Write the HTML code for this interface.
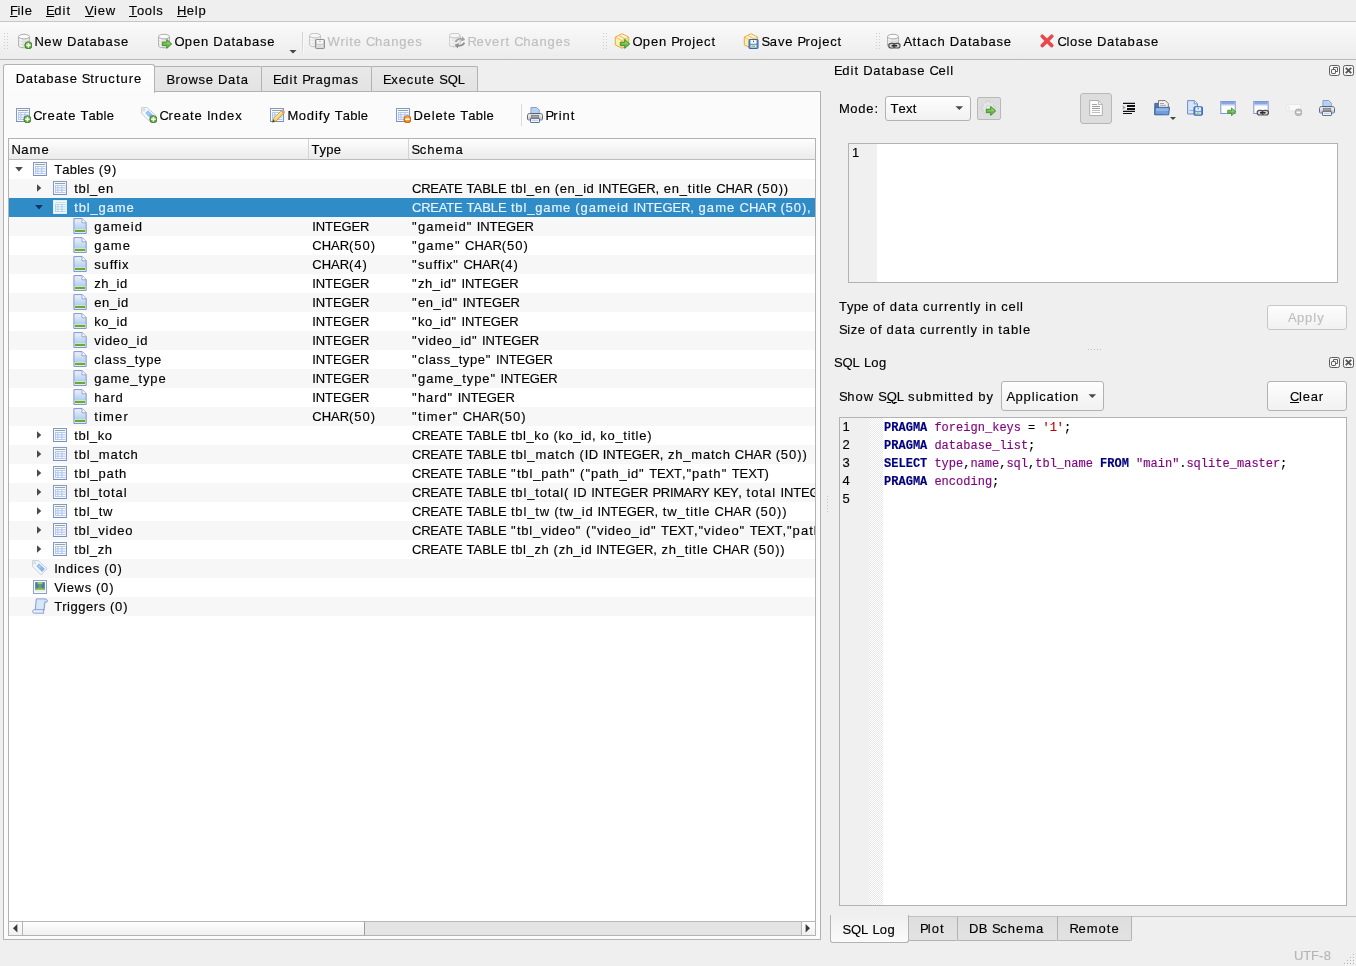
<!DOCTYPE html>
<html><head><meta charset="utf-8"><title>DB Browser for SQLite</title>
<style>
html,body{margin:0;padding:0;}
body{width:1356px;height:966px;overflow:hidden;background:#efefef;position:relative;font-family:"Liberation Sans",sans-serif;font-size:13px;}
div,span.t,svg{position:absolute;box-sizing:border-box;}
span.t{-webkit-text-stroke:0.15px;white-space:pre;line-height:20px;height:20px;}
u{text-decoration:underline;text-underline-offset:1px;text-decoration-thickness:1px;}
#root{left:0;top:0;width:1356px;height:966px;will-change:transform;transform:translateZ(0);}
</style></head><body><div id="root">
<svg width="0" height="0" style="left:0;top:0"><defs><linearGradient id="gf" x1="0" y1="0" x2="0" y2="1"><stop offset="0" stop-color="#edf3fb"/><stop offset=".7" stop-color="#b3cdf0"/><stop offset="1" stop-color="#a9c6ee"/></linearGradient></defs></svg>
<span class="t" style="left:10.00px;top:0.50px;"><span style="letter-spacing:-0.45px"><u>F</u></span><span style="letter-spacing:0.73px">ile</span></span>
<span class="t" style="left:46.00px;top:0.50px;"><span style="letter-spacing:-0.45px"><u>E</u></span><span style="letter-spacing:1.07px">dit</span></span>
<span class="t" style="left:85.00px;top:0.50px;"><span style="letter-spacing:0.22px"><u>V</u></span><span style="letter-spacing:0.91px">iew</span></span>
<span class="t" style="left:129.00px;top:0.50px;"><u>T</u><span style="letter-spacing:0.61px">ools</span></span>
<span class="t" style="left:177.00px;top:0.50px;"><span style="letter-spacing:0.39px"><u>H</u></span><span style="letter-spacing:0.83px">elp</span></span>
<div style="left:0px;top:21px;width:1356px;height:1px;background:#c6c6c6;"></div>
<div style="left:0px;top:22px;width:1356px;height:38px;background:linear-gradient(#fafafa,#ececec);border-bottom:1px solid #b8b8b8;"></div>
<div style="left:4px;top:33px;width:1px;height:1px;background:#cdcdcd;"></div>
<div style="left:7px;top:33px;width:1px;height:1px;background:#cdcdcd;"></div>
<div style="left:4px;top:36px;width:1px;height:1px;background:#cdcdcd;"></div>
<div style="left:7px;top:36px;width:1px;height:1px;background:#cdcdcd;"></div>
<div style="left:4px;top:39px;width:1px;height:1px;background:#cdcdcd;"></div>
<div style="left:7px;top:39px;width:1px;height:1px;background:#cdcdcd;"></div>
<div style="left:4px;top:42px;width:1px;height:1px;background:#cdcdcd;"></div>
<div style="left:7px;top:42px;width:1px;height:1px;background:#cdcdcd;"></div>
<div style="left:4px;top:45px;width:1px;height:1px;background:#cdcdcd;"></div>
<div style="left:7px;top:45px;width:1px;height:1px;background:#cdcdcd;"></div>
<div style="left:4px;top:48px;width:1px;height:1px;background:#cdcdcd;"></div>
<div style="left:7px;top:48px;width:1px;height:1px;background:#cdcdcd;"></div>
<div style="left:603px;top:33px;width:1px;height:1px;background:#cdcdcd;"></div>
<div style="left:606px;top:33px;width:1px;height:1px;background:#cdcdcd;"></div>
<div style="left:603px;top:36px;width:1px;height:1px;background:#cdcdcd;"></div>
<div style="left:606px;top:36px;width:1px;height:1px;background:#cdcdcd;"></div>
<div style="left:603px;top:39px;width:1px;height:1px;background:#cdcdcd;"></div>
<div style="left:606px;top:39px;width:1px;height:1px;background:#cdcdcd;"></div>
<div style="left:603px;top:42px;width:1px;height:1px;background:#cdcdcd;"></div>
<div style="left:606px;top:42px;width:1px;height:1px;background:#cdcdcd;"></div>
<div style="left:603px;top:45px;width:1px;height:1px;background:#cdcdcd;"></div>
<div style="left:606px;top:45px;width:1px;height:1px;background:#cdcdcd;"></div>
<div style="left:603px;top:48px;width:1px;height:1px;background:#cdcdcd;"></div>
<div style="left:606px;top:48px;width:1px;height:1px;background:#cdcdcd;"></div>
<div style="left:876px;top:33px;width:1px;height:1px;background:#cdcdcd;"></div>
<div style="left:879px;top:33px;width:1px;height:1px;background:#cdcdcd;"></div>
<div style="left:876px;top:36px;width:1px;height:1px;background:#cdcdcd;"></div>
<div style="left:879px;top:36px;width:1px;height:1px;background:#cdcdcd;"></div>
<div style="left:876px;top:39px;width:1px;height:1px;background:#cdcdcd;"></div>
<div style="left:879px;top:39px;width:1px;height:1px;background:#cdcdcd;"></div>
<div style="left:876px;top:42px;width:1px;height:1px;background:#cdcdcd;"></div>
<div style="left:879px;top:42px;width:1px;height:1px;background:#cdcdcd;"></div>
<div style="left:876px;top:45px;width:1px;height:1px;background:#cdcdcd;"></div>
<div style="left:879px;top:45px;width:1px;height:1px;background:#cdcdcd;"></div>
<div style="left:876px;top:48px;width:1px;height:1px;background:#cdcdcd;"></div>
<div style="left:879px;top:48px;width:1px;height:1px;background:#cdcdcd;"></div>
<span class="t" style="left:34.50px;top:31.50px;"><span style="letter-spacing:0.33px">N</span><span style="letter-spacing:1.00px">ew</span><span style="letter-spacing:0.52px"> </span><span style="letter-spacing:0.62px">D</span><span style="letter-spacing:0.82px">atabase</span></span>
<span class="t" style="left:174.50px;top:31.50px;"><span style="letter-spacing:0.12px">O</span><span style="letter-spacing:0.93px">pen</span><span style="letter-spacing:0.52px"> </span><span style="letter-spacing:0.62px">D</span><span style="letter-spacing:0.82px">atabase</span></span>
<span class="t" style="left:327.50px;top:31.50px;color:#bebebe;"><span style="letter-spacing:0.59px">W</span><span style="letter-spacing:0.85px">rite</span><span style="letter-spacing:0.52px"> </span><span style="letter-spacing:-0.31px">C</span><span style="letter-spacing:0.80px">hanges</span></span>
<span class="t" style="left:467.50px;top:31.50px;color:#bebebe;"><span style="letter-spacing:-0.36px">R</span><span style="letter-spacing:0.93px">evert</span><span style="letter-spacing:0.52px"> </span><span style="letter-spacing:-0.31px">C</span><span style="letter-spacing:0.80px">hanges</span></span>
<span class="t" style="left:632.50px;top:31.50px;"><span style="letter-spacing:0.12px">O</span><span style="letter-spacing:0.93px">pen</span><span style="letter-spacing:0.52px"> </span><span style="letter-spacing:-0.83px">P</span><span style="letter-spacing:0.80px">roject</span></span>
<span class="t" style="left:761.50px;top:31.50px;"><span style="letter-spacing:-0.42px">S</span><span style="letter-spacing:0.90px">ave</span><span style="letter-spacing:0.52px"> </span><span style="letter-spacing:-0.83px">P</span><span style="letter-spacing:0.80px">roject</span></span>
<span class="t" style="left:903.50px;top:31.50px;"><span style="letter-spacing:0.22px">A</span><span style="letter-spacing:1.02px">ttach</span><span style="letter-spacing:0.52px"> </span><span style="letter-spacing:0.62px">D</span><span style="letter-spacing:0.82px">atabase</span></span>
<span class="t" style="left:1057.50px;top:31.50px;"><span style="letter-spacing:-0.31px">C</span><span style="letter-spacing:0.62px">lose</span><span style="letter-spacing:0.52px"> </span><span style="letter-spacing:0.62px">D</span><span style="letter-spacing:0.82px">atabase</span></span>
<svg style="left:16px;top:33px" width="16" height="16" viewBox="0 0 16 16"><path d="M2.5 3.6v8.8c0 1.5 2.5 2.4 5.5 2.4s5.5-.9 5.5-2.4V3.6" fill="#e6e6e6" stroke="#adadad"/><path d="M3.3 4.5v7.8c0 .9 1.2 1.5 2.4 1.7V6z" fill="#fbfbfb" opacity=".8"/><path d="M2.5 6.6c0 1.4 2.5 2.2 5.5 2.2s5.5-.8 5.5-2.2M2.5 9.6c0 1.4 2.5 2.2 5.5 2.2s5.5-.8 5.5-2.2" fill="none" stroke="#d6d6d6" stroke-width=".8"/><ellipse cx="8" cy="3.6" rx="5.5" ry="2.3" fill="#fbfbfb" stroke="#adadad"/><circle cx="12.4" cy="12.3" r="3.6" fill="#62a840" stroke="#417e2a" stroke-width=".9"/><circle cx="12.4" cy="11.700000000000001" r="2.6" fill="#7cc058" opacity=".6"/><path d="M12.4 10.100000000000001v4.4M10.2 12.3h4.4" stroke="#fff" stroke-width="1.5"/></svg>
<svg style="left:156px;top:33px" width="16" height="16" viewBox="0 0 16 16"><path d="M2.5 3.6v8.8c0 1.5 2.5 2.4 5.5 2.4s5.5-.9 5.5-2.4V3.6" fill="#e6e6e6" stroke="#adadad"/><path d="M3.3 4.5v7.8c0 .9 1.2 1.5 2.4 1.7V6z" fill="#fbfbfb" opacity=".8"/><path d="M2.5 6.6c0 1.4 2.5 2.2 5.5 2.2s5.5-.8 5.5-2.2M2.5 9.6c0 1.4 2.5 2.2 5.5 2.2s5.5-.8 5.5-2.2" fill="none" stroke="#d6d6d6" stroke-width=".8"/><ellipse cx="8" cy="3.6" rx="5.5" ry="2.3" fill="#fbfbfb" stroke="#adadad"/><path transform="translate(0 0)" d="M6.3 9.2h4.4V6.4l5 4.5-5 4.5v-2.8H6.3z" fill="#6dbb4b" stroke="#3d8a2b" stroke-width=".9" stroke-linejoin="round"/><path transform="translate(0 0)" d="M7 10h4.4V8.2l3 2.7z" fill="#a4dd86" opacity=".7"/></svg>
<svg style="left:309px;top:33px" width="16" height="16" viewBox="0 0 16 16"><g transform="translate(-2 -1)"><path d="M2.5 3.6v8.8c0 1.5 2.5 2.4 5.5 2.4s5.5-.9 5.5-2.4V3.6" fill="#ededed" stroke="#c0c0c0"/><path d="M3.3 4.5v7.8c0 .9 1.2 1.5 2.4 1.7V6z" fill="#f7f7f7" opacity=".8"/><path d="M2.5 6.6c0 1.4 2.5 2.2 5.5 2.2s5.5-.8 5.5-2.2M2.5 9.6c0 1.4 2.5 2.2 5.5 2.2s5.5-.8 5.5-2.2" fill="none" stroke="#e2e2e2" stroke-width=".8"/><ellipse cx="8" cy="3.6" rx="5.5" ry="2.3" fill="#f7f7f7" stroke="#c0c0c0"/></g><rect x="6.5" y="6.5" width="9" height="9" rx=".8" fill="#c9c9c9" stroke="#919191"/><rect x="8.0" y="7.0" width="6" height="3.78" fill="#f8f8f8"/><rect x="8.0" y="11.90" width="6" height="2.70" fill="#dfe7f2"/><rect x="9.0" y="12.62" width="3.5" height="1.3" fill="#d6d6d6"/><rect x="10.5" y="7.7" width="1" height="1.4" fill="#919191"/></svg>
<svg style="left:449px;top:33px" width="16" height="16" viewBox="0 0 16 16"><g transform="translate(-2.300 -1)"><path d="M2.5 3.6v8.8c0 1.5 2.5 2.4 5.5 2.4s5.5-.9 5.5-2.4V3.6" fill="#ededed" stroke="#c0c0c0"/><path d="M3.3 4.5v7.8c0 .9 1.2 1.5 2.4 1.7V6z" fill="#f7f7f7" opacity=".8"/><path d="M2.5 6.6c0 1.4 2.5 2.2 5.5 2.2s5.5-.8 5.5-2.2M2.5 9.6c0 1.4 2.5 2.2 5.5 2.2s5.5-.8 5.5-2.2" fill="none" stroke="#e2e2e2" stroke-width=".8"/><ellipse cx="8" cy="3.6" rx="5.5" ry="2.3" fill="#f7f7f7" stroke="#c0c0c0"/></g><path d="M5.800 8.800c1.200-3 4-4.200 7-3.600l.400-2 3.200 3.700-4.400 1.500.400-1.700c-2-.400-3.800.400-4.800 2.600z" fill="#a2a2a2"/><path d="M16.200 9.800c-1.200 3-4 4.200-7 3.600l-.400 2-3.200-3.700 4.400-1.500-.400 1.700c2 .400 3.800-.400 4.800-2.600z" fill="#8e8e8e"/></svg>
<svg style="left:614px;top:33px" width="16" height="16" viewBox="0 0 16 16"><path d="M8 .7l6.7 3.4v7.8L8 15.3 1.3 11.9V4.1z" fill="#fbf1a8" stroke="#dfa94e" stroke-linejoin="round"/><path d="M1.6 4.3L8 7.5l6.4-3.2M8 7.5v7.6" fill="none" stroke="#e8b45c" stroke-width=".9"/><path d="M8 1.4L2.6 4.1 8 6.8l5.4-2.7z" fill="#fdf7cf"/><path d="M8 7.9l6.2-3.1v6.8L8 14.7z" fill="#f5dc7e" opacity=".75"/><path d="M4.6 2.6l6.5 3.2" stroke="#eec06c" stroke-width="1.1"/><path transform="translate(0 0)" d="M6.3 9.2h4.4V6.4l5 4.5-5 4.5v-2.8H6.3z" fill="#6dbb4b" stroke="#3d8a2b" stroke-width=".9" stroke-linejoin="round"/><path transform="translate(0 0)" d="M7 10h4.4V8.2l3 2.7z" fill="#a4dd86" opacity=".7"/></svg>
<svg style="left:743px;top:33px" width="16" height="16" viewBox="0 0 16 16"><path d="M8 .7l6.7 3.4v7.8L8 15.3 1.3 11.9V4.1z" fill="#fbf1a8" stroke="#dfa94e" stroke-linejoin="round"/><path d="M1.6 4.3L8 7.5l6.4-3.2M8 7.5v7.6" fill="none" stroke="#e8b45c" stroke-width=".9"/><path d="M8 1.4L2.6 4.1 8 6.8l5.4-2.7z" fill="#fdf7cf"/><path d="M8 7.9l6.2-3.1v6.8L8 14.7z" fill="#f5dc7e" opacity=".75"/><path d="M4.6 2.6l6.5 3.2" stroke="#eec06c" stroke-width="1.1"/><rect x="6" y="6.5" width="9" height="9" rx=".8" fill="#5d8fd4" stroke="#3c62a2"/><rect x="7.5" y="7.0" width="6" height="3.78" fill="#f4f7fb"/><rect x="7.5" y="11.90" width="6" height="2.70" fill="#dfe7f2"/><rect x="8.5" y="12.62" width="3.5" height="1.3" fill="#8cc152"/><rect x="10.0" y="7.7" width="1" height="1.4" fill="#3c62a2"/></svg>
<svg style="left:885px;top:33px" width="16" height="16" viewBox="0 0 16 16"><path d="M2.5 3.6v8.8c0 1.5 2.5 2.4 5.5 2.4s5.5-.9 5.5-2.4V3.6" fill="#e6e6e6" stroke="#adadad"/><path d="M3.3 4.5v7.8c0 .9 1.2 1.5 2.4 1.7V6z" fill="#fbfbfb" opacity=".8"/><path d="M2.5 6.6c0 1.4 2.5 2.2 5.5 2.2s5.5-.8 5.5-2.2M2.5 9.6c0 1.4 2.5 2.2 5.5 2.2s5.5-.8 5.5-2.2" fill="none" stroke="#d6d6d6" stroke-width=".8"/><ellipse cx="8" cy="3.6" rx="5.5" ry="2.3" fill="#fbfbfb" stroke="#adadad"/><g transform="translate(3.2 9.8)"><rect x=".6" y=".6" width="6.2" height="4.6" rx="2.2" fill="#dcdcdc" stroke="#4f4f4f" stroke-width="1.2"/><rect x="5.6" y=".6" width="6.2" height="4.6" rx="2.2" fill="#dcdcdc" stroke="#4f4f4f" stroke-width="1.2"/><path d="M3.4 2.9h5.6" stroke="#2b2b2b" stroke-width="1.7"/></g></svg>
<svg style="left:1039px;top:33px" width="16" height="16" viewBox="0 0 16 16"><path d="M3.200 3.200l9.600 9.400M12.800 3.200L3.200 12.600" stroke="#d9505c" stroke-width="3.600" stroke-linecap="round"/><path d="M3.400 3.400l9.200 9M12.600 3.400L3.400 12.400" stroke="#f24545" stroke-width="2.200" stroke-linecap="round"/></svg>
<div style="left:302px;top:32px;width:1px;height:22px;background:linear-gradient(#d0d0d0,#d8d8d8 70%,#e4e4e4);"></div>
<div style="left:303px;top:32px;width:1px;height:22px;background:#f8f8f8;"></div>
<svg style="left:289px;top:50px" width="8" height="4"><path d="M0.5 0h7l-3.500 3.600z" fill="#444"/></svg>
<div style="left:3px;top:91px;width:818px;height:849px;background:#fbfbfb;border:1px solid #b2b2b2;"></div>
<div style="left:154px;top:66px;width:108px;height:25px;background:linear-gradient(#e9e9e9,#e3e3e3);border:1px solid #b2b2b2;border-bottom:none;border-radius:2px 2px 0 0;"></div>
<span class="t" style="left:166.50px;top:69.50px;"><span style="letter-spacing:0.25px">B</span><span style="letter-spacing:0.74px">rowse</span><span style="letter-spacing:0.52px"> </span><span style="letter-spacing:0.62px">D</span><span style="letter-spacing:0.98px">ata</span></span>
<div style="left:261px;top:66px;width:111px;height:25px;background:linear-gradient(#e9e9e9,#e3e3e3);border:1px solid #b2b2b2;border-bottom:none;border-radius:2px 2px 0 0;"></div>
<span class="t" style="left:273.00px;top:69.50px;"><span style="letter-spacing:-0.45px">E</span><span style="letter-spacing:1.07px">dit</span><span style="letter-spacing:0.52px"> </span><span style="letter-spacing:-0.83px">P</span><span style="letter-spacing:0.89px">ragmas</span></span>
<div style="left:371px;top:66px;width:107px;height:25px;background:linear-gradient(#e9e9e9,#e3e3e3);border:1px solid #b2b2b2;border-bottom:none;border-radius:2px 2px 0 0;"></div>
<span class="t" style="left:383.00px;top:69.50px;"><span style="letter-spacing:-0.45px">E</span><span style="letter-spacing:0.91px">xecute</span><span style="letter-spacing:0.52px"> </span><span style="letter-spacing:-0.09px">SQL</span></span>
<div style="left:3px;top:64px;width:152px;height:29px;background:linear-gradient(#fdfdfd,#fbfbfb);border:1px solid #b2b2b2;border-bottom:none;border-radius:3px 3px 0 0;"></div>
<span class="t" style="left:15.70px;top:68.50px;"><span style="letter-spacing:0.62px">D</span><span style="letter-spacing:0.82px">atabase</span><span style="letter-spacing:0.52px"> </span><span style="letter-spacing:-0.42px">S</span><span style="letter-spacing:1.02px">tructure</span></span>
<span class="t" style="left:33.20px;top:105.50px;"><span style="letter-spacing:-0.31px">C</span><span style="letter-spacing:0.90px">reate</span><span style="letter-spacing:0.52px"> </span>T<span style="letter-spacing:0.27px">able</span></span>
<span class="t" style="left:159.50px;top:105.50px;"><span style="letter-spacing:-0.31px">C</span><span style="letter-spacing:0.90px">reate</span><span style="letter-spacing:0.52px"> </span><span style="letter-spacing:0.22px">I</span><span style="letter-spacing:0.93px">ndex</span></span>
<span class="t" style="left:287.50px;top:105.50px;"><span style="letter-spacing:0.39px">M</span><span style="letter-spacing:0.88px">odify</span><span style="letter-spacing:0.52px"> </span>T<span style="letter-spacing:0.27px">able</span></span>
<span class="t" style="left:413.50px;top:105.50px;"><span style="letter-spacing:0.62px">D</span><span style="letter-spacing:0.90px">elete</span><span style="letter-spacing:0.52px"> </span>T<span style="letter-spacing:0.27px">able</span></span>
<span class="t" style="left:545.50px;top:105.50px;"><span style="letter-spacing:-0.83px">P</span><span style="letter-spacing:1.00px">rint</span></span>
<div style="left:521px;top:104px;width:1px;height:22px;background:#dadada;"></div>
<svg style="left:15px;top:107px" width="16" height="16" viewBox="0 0 16 16"><rect x="1.500" y="1.500" width="13" height="13" fill="#f5f9fe" stroke="#8298c6"/><path d="M1.500 14.500h13" stroke="#7389bb" opacity=".6"/><path d="M3 3.500h10.200" stroke="#8fa69b" stroke-width="1"/><rect x="3" y="5" width="10.500" height="8" fill="#b4c8f0"/><rect x="4" y="6" width="1.300" height="1.200" fill="#ffffff"/><rect x="6.400" y="6" width="2.800" height="1.200" fill="#ffffff"/><rect x="10.400" y="6" width="3.100" height="1.200" fill="#ffffff"/><rect x="4" y="8.4" width="1.300" height="1.200" fill="#ffffff"/><rect x="6.400" y="8.4" width="2.800" height="1.200" fill="#ffffff"/><rect x="10.400" y="8.4" width="3.100" height="1.200" fill="#ffffff"/><rect x="4" y="10.8" width="1.300" height="1.200" fill="#ffffff"/><rect x="6.400" y="10.8" width="2.800" height="1.200" fill="#ffffff"/><rect x="10.400" y="10.8" width="3.100" height="1.200" fill="#ffffff"/><circle cx="12.4" cy="12.3" r="3.6" fill="#62a840" stroke="#417e2a" stroke-width=".9"/><circle cx="12.4" cy="11.700000000000001" r="2.6" fill="#7cc058" opacity=".6"/><path d="M12.4 10.100000000000001v4.4M10.2 12.3h4.4" stroke="#fff" stroke-width="1.5"/></svg>
<svg style="left:141px;top:107px" width="16" height="16" viewBox="0 0 16 16"><path d="M.600 .600h5.600l8.900 8.100-6.100 6.100L.600 6.300z" fill="#f4f7fb" stroke="#bfc8d4" stroke-width=".900" stroke-linejoin="round"/><path d="M4.300 6l2.700-2.500 6 5.400-3 3z" fill="#84b7ec"/><path d="M5.300 6l1.700-1.500 2.600 2.300-1.800 1.700z" fill="#a9cff5" opacity=".8"/><circle cx="2.900" cy="2.900" r="1" fill="#fdfdfd" stroke="#b7c0cc" stroke-width=".700"/><circle cx="12.4" cy="12.3" r="3.6" fill="#62a840" stroke="#417e2a" stroke-width=".9"/><circle cx="12.4" cy="11.700000000000001" r="2.6" fill="#7cc058" opacity=".6"/><path d="M12.4 10.100000000000001v4.4M10.2 12.3h4.4" stroke="#fff" stroke-width="1.5"/></svg>
<svg style="left:269px;top:107px" width="16" height="16" viewBox="0 0 16 16"><rect x="1.500" y="1.500" width="13" height="13" fill="#f5f9fe" stroke="#8298c6"/><path d="M1.500 14.500h13" stroke="#7389bb" opacity=".6"/><path d="M3 3.500h10.200" stroke="#8fa69b" stroke-width="1"/><rect x="3" y="5" width="10.500" height="8" fill="#b4c8f0"/><rect x="4" y="6" width="1.300" height="1.200" fill="#ffffff"/><rect x="6.400" y="6" width="2.800" height="1.200" fill="#ffffff"/><rect x="10.400" y="6" width="3.100" height="1.200" fill="#ffffff"/><rect x="4" y="8.4" width="1.300" height="1.200" fill="#ffffff"/><rect x="6.400" y="8.4" width="2.800" height="1.200" fill="#ffffff"/><rect x="10.400" y="8.4" width="3.100" height="1.200" fill="#ffffff"/><rect x="4" y="10.8" width="1.300" height="1.200" fill="#ffffff"/><rect x="6.400" y="10.8" width="2.800" height="1.200" fill="#ffffff"/><rect x="10.400" y="10.8" width="3.100" height="1.200" fill="#ffffff"/><g transform="translate(0 .4)"><path d="M3.6 14.6l1-3.3 7.8-7.8 2.4 2.4L7 13.7z" fill="#f6d45a" stroke="#c58a2a" stroke-width=".8" stroke-linejoin="round"/><path d="M5.2 11l7.6-7.5.9.9-7.6 7.6z" fill="#fbe990"/><path d="M12.4 3.5l1.2-1.1 2.1 2.3-1 1.2z" fill="#f2a7a0" stroke="#c87a6c" stroke-width=".6"/><path d="M3.2 15l.9-2.9 2 2z" fill="#3a3a3a"/></g></svg>
<svg style="left:395px;top:107px" width="16" height="16" viewBox="0 0 16 16"><rect x="1.500" y="1.500" width="13" height="13" fill="#f5f9fe" stroke="#8298c6"/><path d="M1.500 14.500h13" stroke="#7389bb" opacity=".6"/><path d="M3 3.500h10.200" stroke="#8fa69b" stroke-width="1"/><rect x="3" y="5" width="10.500" height="8" fill="#b4c8f0"/><rect x="4" y="6" width="1.300" height="1.200" fill="#ffffff"/><rect x="6.400" y="6" width="2.800" height="1.200" fill="#ffffff"/><rect x="10.400" y="6" width="3.100" height="1.200" fill="#ffffff"/><rect x="4" y="8.4" width="1.300" height="1.200" fill="#ffffff"/><rect x="6.400" y="8.4" width="2.800" height="1.200" fill="#ffffff"/><rect x="10.400" y="8.4" width="3.100" height="1.200" fill="#ffffff"/><rect x="4" y="10.8" width="1.300" height="1.200" fill="#ffffff"/><rect x="6.400" y="10.8" width="2.800" height="1.200" fill="#ffffff"/><rect x="10.400" y="10.8" width="3.100" height="1.200" fill="#ffffff"/><circle cx="12.4" cy="12.3" r="3.6" fill="#ef8b1f" stroke="#c25a0c" stroke-width=".9"/><circle cx="12.4" cy="11.5" r="2.4" fill="#f8b04a" opacity=".7"/><path d="M10.2 12.3h4.4" stroke="#fff" stroke-width="1.5"/></svg>
<svg style="left:527px;top:107px" width="16" height="16" viewBox="0 0 16 16"><path d="M4 7.500V.600h5.800l2.400 2.400v4.500" fill="#cfe2f8" stroke="#7a93c6" stroke-linejoin="round"/><path d="M4.900 1.500h4.400l2 2v3.500H4.900z" fill="#b4d0f2"/><path d="M2.400 6.500h11.200c1.100 0 1.900.900 1.900 2v3.400c0 .600-.400 1-1 1H1.500c-.600 0-1-.400-1-1V8.500c0-1.100.800-2 1.900-2z" fill="#e9e9e9" stroke="#566682" stroke-linejoin="round"/><path d="M1.200 10.300h13.600v2.100H1.200z" fill="#c4c4c4" opacity=".8"/><rect x="4.200" y="8.200" width="7.600" height="2.700" fill="#a4a4a4" stroke="#6f6f6f" stroke-width=".600"/><path d="M3.500 11.600h9v3.400c0 .300-.200.500-.500.500H4c-.300 0-.500-.200-.500-.500z" fill="#f5f9fe" stroke="#566682" stroke-width=".900"/><path d="M4.800 13.600h6.400" stroke="#b4cae8" stroke-width=".900"/></svg>
<div style="left:8px;top:138px;width:808px;height:798px;background:#fff;border:1px solid #b2b2b2;"></div>
<div style="left:9px;top:139px;width:806px;height:21px;background:linear-gradient(#fefefe,#ebebeb);border-bottom:1px solid #bdbdbd;"></div>
<div style="left:308px;top:139px;width:1px;height:20px;background:#d4d4d4;"></div>
<div style="left:408px;top:139px;width:1px;height:20px;background:#d4d4d4;"></div>
<span class="t" style="left:11.50px;top:139.50px;"><span style="letter-spacing:0.33px">N</span><span style="letter-spacing:1.11px">ame</span></span>
<span class="t" style="left:311.50px;top:139.50px;">T<span style="letter-spacing:0.31px">ype</span></span>
<span class="t" style="left:411.50px;top:139.50px;"><span style="letter-spacing:-0.42px">S</span><span style="letter-spacing:0.99px">chema</span></span>
<span class="t" style="left:54.20px;top:159.50px;">T<span style="letter-spacing:0.27px">ables</span><span style="letter-spacing:0.52px"> </span><span style="letter-spacing:0.75px">(</span><span style="letter-spacing:1.03px">9</span><span style="letter-spacing:0.75px">)</span></span>
<svg style="left:15px;top:167px" width="8" height="5"><path d="M0.200 0h7.600l-3.800 4.500z" fill="#4a4a4a"/></svg>
<svg style="left:32px;top:161px" width="16" height="16" viewBox="0 0 16 16"><rect x="1.500" y="1.500" width="13" height="13" fill="#f5f9fe" stroke="#8298c6"/><path d="M1.500 14.500h13" stroke="#7389bb" opacity=".6"/><path d="M3 3.500h10.200" stroke="#8fa69b" stroke-width="1"/><rect x="3" y="5" width="10.500" height="8" fill="#b4c8f0"/><rect x="4" y="6" width="1.300" height="1.200" fill="#ffffff"/><rect x="6.400" y="6" width="2.800" height="1.200" fill="#ffffff"/><rect x="10.400" y="6" width="3.100" height="1.200" fill="#ffffff"/><rect x="4" y="8.4" width="1.300" height="1.200" fill="#ffffff"/><rect x="6.400" y="8.4" width="2.800" height="1.200" fill="#ffffff"/><rect x="10.400" y="8.4" width="3.100" height="1.200" fill="#ffffff"/><rect x="4" y="10.8" width="1.300" height="1.200" fill="#ffffff"/><rect x="6.400" y="10.8" width="2.800" height="1.200" fill="#ffffff"/><rect x="10.400" y="10.8" width="3.100" height="1.200" fill="#ffffff"/></svg>
<div style="left:9px;top:179px;width:806px;height:19px;background:#f7f7f7;"></div>
<span class="t" style="left:74.20px;top:178.50px;"><span style="letter-spacing:0.71px">tbl_en</span></span>
<div style="left:409px;top:179px;width:406px;height:19px;overflow:hidden;">
<span class="t" style="left:3.00px;top:-0.50px;"><span style="letter-spacing:-0.23px">CREATE</span><span style="letter-spacing:0.52px"> </span>TABLE<span style="letter-spacing:0.52px"> </span><span style="letter-spacing:0.71px">tbl_en</span><span style="letter-spacing:0.52px"> </span><span style="letter-spacing:0.75px">(</span><span style="letter-spacing:0.55px">en_id</span><span style="letter-spacing:0.52px"> </span><span style="letter-spacing:-0.11px">INTEGER</span><span style="letter-spacing:0.52px">,</span><span style="letter-spacing:0.52px"> </span><span style="letter-spacing:0.78px">en_title</span><span style="letter-spacing:0.52px"> </span><span style="letter-spacing:-0.02px">CHAR</span><span style="letter-spacing:0.52px"> </span><span style="letter-spacing:0.75px">(</span><span style="letter-spacing:1.03px">50</span><span style="letter-spacing:0.75px">))</span></span>
</div>
<svg style="left:37px;top:184px" width="5" height="8"><path d="M0 0.200v7.600l4.300-3.800z" fill="#4a4a4a"/></svg>
<svg style="left:52px;top:180px" width="16" height="16" viewBox="0 0 16 16"><rect x="1.500" y="1.500" width="13" height="13" fill="#f5f9fe" stroke="#8298c6"/><path d="M1.500 14.500h13" stroke="#7389bb" opacity=".6"/><path d="M3 3.500h10.200" stroke="#8fa69b" stroke-width="1"/><rect x="3" y="5" width="10.500" height="8" fill="#b4c8f0"/><rect x="4" y="6" width="1.300" height="1.200" fill="#ffffff"/><rect x="6.400" y="6" width="2.800" height="1.200" fill="#ffffff"/><rect x="10.400" y="6" width="3.100" height="1.200" fill="#ffffff"/><rect x="4" y="8.4" width="1.300" height="1.200" fill="#ffffff"/><rect x="6.400" y="8.4" width="2.800" height="1.200" fill="#ffffff"/><rect x="10.400" y="8.4" width="3.100" height="1.200" fill="#ffffff"/><rect x="4" y="10.8" width="1.300" height="1.200" fill="#ffffff"/><rect x="6.400" y="10.8" width="2.800" height="1.200" fill="#ffffff"/><rect x="10.400" y="10.8" width="3.100" height="1.200" fill="#ffffff"/></svg>
<div style="left:9px;top:198px;width:806px;height:19px;background:#308cc6;"></div>
<span class="t" style="left:74.20px;top:197.50px;color:#e9f4fb;"><span style="letter-spacing:0.85px">tbl_game</span></span>
<div style="left:409px;top:198px;width:406px;height:19px;overflow:hidden;">
<span class="t" style="left:3.00px;top:-0.50px;color:#e9f4fb;"><span style="letter-spacing:-0.23px">CREATE</span><span style="letter-spacing:0.52px"> </span>TABLE<span style="letter-spacing:0.52px"> </span><span style="letter-spacing:0.85px">tbl_game</span><span style="letter-spacing:0.52px"> </span><span style="letter-spacing:0.75px">(</span><span style="letter-spacing:1.01px">gameid</span><span style="letter-spacing:0.52px"> </span><span style="letter-spacing:-0.11px">INTEGER</span><span style="letter-spacing:0.52px">,</span><span style="letter-spacing:0.52px"> </span><span style="letter-spacing:1.09px">game</span><span style="letter-spacing:0.52px"> </span><span style="letter-spacing:-0.02px">CHAR</span><span style="letter-spacing:0.52px"> </span><span style="letter-spacing:0.75px">(</span><span style="letter-spacing:1.03px">50</span><span style="letter-spacing:0.63px">),</span></span>
</div>
<svg style="left:35px;top:205px" width="8" height="5"><path d="M0.200 0h7.600l-3.800 4.500z" fill="#0b3562"/></svg>
<svg style="left:52px;top:199px" width="16" height="16" viewBox="0 0 16 16"><rect x="1.500" y="1.500" width="13" height="13" fill="#f3f8fc" stroke="#e2eff9"/><path d="M1.500 14.500h13" stroke="#e2eff9" opacity=".6"/><path d="M3 3.500h10.200" stroke="#c9dbe6" stroke-width="1"/><rect x="3" y="5" width="10.500" height="8" fill="#b3d4ed"/><rect x="4" y="6" width="1.300" height="1.200" fill="#ffffff"/><rect x="6.400" y="6" width="2.800" height="1.200" fill="#ffffff"/><rect x="10.400" y="6" width="3.100" height="1.200" fill="#ffffff"/><rect x="4" y="8.4" width="1.300" height="1.200" fill="#ffffff"/><rect x="6.400" y="8.4" width="2.800" height="1.200" fill="#ffffff"/><rect x="10.400" y="8.4" width="3.100" height="1.200" fill="#ffffff"/><rect x="4" y="10.8" width="1.300" height="1.200" fill="#ffffff"/><rect x="6.400" y="10.8" width="2.800" height="1.200" fill="#ffffff"/><rect x="10.400" y="10.8" width="3.100" height="1.200" fill="#ffffff"/></svg>
<div style="left:9px;top:217px;width:806px;height:19px;background:#f7f7f7;"></div>
<span class="t" style="left:94.20px;top:216.50px;"><span style="letter-spacing:1.01px">gameid</span></span>
<span class="t" style="left:312.30px;top:216.50px;"><span style="letter-spacing:-0.11px">INTEGER</span></span>
<div style="left:409px;top:217px;width:406px;height:19px;overflow:hidden;">
<span class="t" style="left:3.00px;top:-0.50px;"><span style="letter-spacing:1.38px">&quot;</span><span style="letter-spacing:1.01px">gameid</span><span style="letter-spacing:1.38px">&quot;</span><span style="letter-spacing:0.52px"> </span><span style="letter-spacing:-0.11px">INTEGER</span></span>
</div>
<svg style="left:72px;top:218px" width="16" height="16" viewBox="0 0 16 16"><path d="M1.900 .6h8.300l4 4v10.900h-12.300z" fill="url(#gf)" stroke="#8497c8" stroke-linejoin="round"/><path d="M10 .8v4h4" fill="#fff" stroke="#8b9fcf" stroke-width=".9" stroke-linejoin="round"/><rect x="2.800" y="11" width="10.500" height="4" fill="#fff"/><rect x="3" y="11.700" width="10.100" height="2.500" fill="#67aa3c"/></svg>
<span class="t" style="left:94.20px;top:235.50px;"><span style="letter-spacing:1.09px">game</span></span>
<span class="t" style="left:312.30px;top:235.50px;"><span style="letter-spacing:-0.02px">CHAR</span><span style="letter-spacing:0.75px">(</span><span style="letter-spacing:1.03px">50</span><span style="letter-spacing:0.75px">)</span></span>
<div style="left:409px;top:236px;width:406px;height:19px;overflow:hidden;">
<span class="t" style="left:3.00px;top:-0.50px;"><span style="letter-spacing:1.38px">&quot;</span><span style="letter-spacing:1.09px">game</span><span style="letter-spacing:1.38px">&quot;</span><span style="letter-spacing:0.52px"> </span><span style="letter-spacing:-0.02px">CHAR</span><span style="letter-spacing:0.75px">(</span><span style="letter-spacing:1.03px">50</span><span style="letter-spacing:0.75px">)</span></span>
</div>
<svg style="left:72px;top:237px" width="16" height="16" viewBox="0 0 16 16"><path d="M1.900 .6h8.300l4 4v10.900h-12.300z" fill="url(#gf)" stroke="#8497c8" stroke-linejoin="round"/><path d="M10 .8v4h4" fill="#fff" stroke="#8b9fcf" stroke-width=".9" stroke-linejoin="round"/><rect x="2.800" y="11" width="10.500" height="4" fill="#fff"/><rect x="3" y="11.700" width="10.100" height="2.500" fill="#67aa3c"/></svg>
<div style="left:9px;top:255px;width:806px;height:19px;background:#f7f7f7;"></div>
<span class="t" style="left:94.20px;top:254.50px;"><span style="letter-spacing:0.86px">suffix</span></span>
<span class="t" style="left:312.30px;top:254.50px;"><span style="letter-spacing:-0.02px">CHAR</span><span style="letter-spacing:0.75px">(</span><span style="letter-spacing:1.03px">4</span><span style="letter-spacing:0.75px">)</span></span>
<div style="left:409px;top:255px;width:406px;height:19px;overflow:hidden;">
<span class="t" style="left:3.00px;top:-0.50px;"><span style="letter-spacing:1.38px">&quot;</span><span style="letter-spacing:0.86px">suffix</span><span style="letter-spacing:1.38px">&quot;</span><span style="letter-spacing:0.52px"> </span><span style="letter-spacing:-0.02px">CHAR</span><span style="letter-spacing:0.75px">(</span><span style="letter-spacing:1.03px">4</span><span style="letter-spacing:0.75px">)</span></span>
</div>
<svg style="left:72px;top:256px" width="16" height="16" viewBox="0 0 16 16"><path d="M1.900 .6h8.300l4 4v10.900h-12.300z" fill="url(#gf)" stroke="#8497c8" stroke-linejoin="round"/><path d="M10 .8v4h4" fill="#fff" stroke="#8b9fcf" stroke-width=".9" stroke-linejoin="round"/><rect x="2.800" y="11" width="10.500" height="4" fill="#fff"/><rect x="3" y="11.700" width="10.100" height="2.500" fill="#67aa3c"/></svg>
<span class="t" style="left:94.20px;top:273.50px;"><span style="letter-spacing:0.47px">zh_id</span></span>
<span class="t" style="left:312.30px;top:273.50px;"><span style="letter-spacing:-0.11px">INTEGER</span></span>
<div style="left:409px;top:274px;width:406px;height:19px;overflow:hidden;">
<span class="t" style="left:3.00px;top:-0.50px;"><span style="letter-spacing:1.38px">&quot;</span><span style="letter-spacing:0.47px">zh_id</span><span style="letter-spacing:1.38px">&quot;</span><span style="letter-spacing:0.52px"> </span><span style="letter-spacing:-0.11px">INTEGER</span></span>
</div>
<svg style="left:72px;top:275px" width="16" height="16" viewBox="0 0 16 16"><path d="M1.900 .6h8.300l4 4v10.900h-12.300z" fill="url(#gf)" stroke="#8497c8" stroke-linejoin="round"/><path d="M10 .8v4h4" fill="#fff" stroke="#8b9fcf" stroke-width=".9" stroke-linejoin="round"/><rect x="2.800" y="11" width="10.500" height="4" fill="#fff"/><rect x="3" y="11.700" width="10.100" height="2.500" fill="#67aa3c"/></svg>
<div style="left:9px;top:293px;width:806px;height:19px;background:#f7f7f7;"></div>
<span class="t" style="left:94.20px;top:292.50px;"><span style="letter-spacing:0.55px">en_id</span></span>
<span class="t" style="left:312.30px;top:292.50px;"><span style="letter-spacing:-0.11px">INTEGER</span></span>
<div style="left:409px;top:293px;width:406px;height:19px;overflow:hidden;">
<span class="t" style="left:3.00px;top:-0.50px;"><span style="letter-spacing:1.38px">&quot;</span><span style="letter-spacing:0.55px">en_id</span><span style="letter-spacing:1.38px">&quot;</span><span style="letter-spacing:0.52px"> </span><span style="letter-spacing:-0.11px">INTEGER</span></span>
</div>
<svg style="left:72px;top:294px" width="16" height="16" viewBox="0 0 16 16"><path d="M1.900 .6h8.300l4 4v10.900h-12.300z" fill="url(#gf)" stroke="#8497c8" stroke-linejoin="round"/><path d="M10 .8v4h4" fill="#fff" stroke="#8b9fcf" stroke-width=".9" stroke-linejoin="round"/><rect x="2.800" y="11" width="10.500" height="4" fill="#fff"/><rect x="3" y="11.700" width="10.100" height="2.500" fill="#67aa3c"/></svg>
<span class="t" style="left:94.20px;top:311.50px;"><span style="letter-spacing:0.46px">ko_id</span></span>
<span class="t" style="left:312.30px;top:311.50px;"><span style="letter-spacing:-0.11px">INTEGER</span></span>
<div style="left:409px;top:312px;width:406px;height:19px;overflow:hidden;">
<span class="t" style="left:3.00px;top:-0.50px;"><span style="letter-spacing:1.38px">&quot;</span><span style="letter-spacing:0.46px">ko_id</span><span style="letter-spacing:1.38px">&quot;</span><span style="letter-spacing:0.52px"> </span><span style="letter-spacing:-0.11px">INTEGER</span></span>
</div>
<svg style="left:72px;top:313px" width="16" height="16" viewBox="0 0 16 16"><path d="M1.900 .6h8.300l4 4v10.900h-12.300z" fill="url(#gf)" stroke="#8497c8" stroke-linejoin="round"/><path d="M10 .8v4h4" fill="#fff" stroke="#8b9fcf" stroke-width=".9" stroke-linejoin="round"/><rect x="2.800" y="11" width="10.500" height="4" fill="#fff"/><rect x="3" y="11.700" width="10.100" height="2.500" fill="#67aa3c"/></svg>
<div style="left:9px;top:331px;width:806px;height:19px;background:#f7f7f7;"></div>
<span class="t" style="left:94.20px;top:330.50px;"><span style="letter-spacing:0.68px">video_id</span></span>
<span class="t" style="left:312.30px;top:330.50px;"><span style="letter-spacing:-0.11px">INTEGER</span></span>
<div style="left:409px;top:331px;width:406px;height:19px;overflow:hidden;">
<span class="t" style="left:3.00px;top:-0.50px;"><span style="letter-spacing:1.38px">&quot;</span><span style="letter-spacing:0.68px">video_id</span><span style="letter-spacing:1.38px">&quot;</span><span style="letter-spacing:0.52px"> </span><span style="letter-spacing:-0.11px">INTEGER</span></span>
</div>
<svg style="left:72px;top:332px" width="16" height="16" viewBox="0 0 16 16"><path d="M1.900 .6h8.300l4 4v10.900h-12.300z" fill="url(#gf)" stroke="#8497c8" stroke-linejoin="round"/><path d="M10 .8v4h4" fill="#fff" stroke="#8b9fcf" stroke-width=".9" stroke-linejoin="round"/><rect x="2.800" y="11" width="10.500" height="4" fill="#fff"/><rect x="3" y="11.700" width="10.100" height="2.500" fill="#67aa3c"/></svg>
<span class="t" style="left:94.20px;top:349.50px;"><span style="letter-spacing:0.63px">class_type</span></span>
<span class="t" style="left:312.30px;top:349.50px;"><span style="letter-spacing:-0.11px">INTEGER</span></span>
<div style="left:409px;top:350px;width:406px;height:19px;overflow:hidden;">
<span class="t" style="left:3.00px;top:-0.50px;"><span style="letter-spacing:1.38px">&quot;</span><span style="letter-spacing:0.63px">class_type</span><span style="letter-spacing:1.38px">&quot;</span><span style="letter-spacing:0.52px"> </span><span style="letter-spacing:-0.11px">INTEGER</span></span>
</div>
<svg style="left:72px;top:351px" width="16" height="16" viewBox="0 0 16 16"><path d="M1.900 .6h8.300l4 4v10.900h-12.300z" fill="url(#gf)" stroke="#8497c8" stroke-linejoin="round"/><path d="M10 .8v4h4" fill="#fff" stroke="#8b9fcf" stroke-width=".9" stroke-linejoin="round"/><rect x="2.800" y="11" width="10.500" height="4" fill="#fff"/><rect x="3" y="11.700" width="10.100" height="2.500" fill="#67aa3c"/></svg>
<div style="left:9px;top:369px;width:806px;height:19px;background:#f7f7f7;"></div>
<span class="t" style="left:94.20px;top:368.50px;"><span style="letter-spacing:0.90px">game_type</span></span>
<span class="t" style="left:312.30px;top:368.50px;"><span style="letter-spacing:-0.11px">INTEGER</span></span>
<div style="left:409px;top:369px;width:406px;height:19px;overflow:hidden;">
<span class="t" style="left:3.00px;top:-0.50px;"><span style="letter-spacing:1.38px">&quot;</span><span style="letter-spacing:0.90px">game_type</span><span style="letter-spacing:1.38px">&quot;</span><span style="letter-spacing:0.52px"> </span><span style="letter-spacing:-0.11px">INTEGER</span></span>
</div>
<svg style="left:72px;top:370px" width="16" height="16" viewBox="0 0 16 16"><path d="M1.900 .6h8.300l4 4v10.900h-12.300z" fill="url(#gf)" stroke="#8497c8" stroke-linejoin="round"/><path d="M10 .8v4h4" fill="#fff" stroke="#8b9fcf" stroke-width=".9" stroke-linejoin="round"/><rect x="2.800" y="11" width="10.500" height="4" fill="#fff"/><rect x="3" y="11.700" width="10.100" height="2.500" fill="#67aa3c"/></svg>
<span class="t" style="left:94.20px;top:387.50px;"><span style="letter-spacing:0.88px">hard</span></span>
<span class="t" style="left:312.30px;top:387.50px;"><span style="letter-spacing:-0.11px">INTEGER</span></span>
<div style="left:409px;top:388px;width:406px;height:19px;overflow:hidden;">
<span class="t" style="left:3.00px;top:-0.50px;"><span style="letter-spacing:1.38px">&quot;</span><span style="letter-spacing:0.88px">hard</span><span style="letter-spacing:1.38px">&quot;</span><span style="letter-spacing:0.52px"> </span><span style="letter-spacing:-0.11px">INTEGER</span></span>
</div>
<svg style="left:72px;top:389px" width="16" height="16" viewBox="0 0 16 16"><path d="M1.900 .6h8.300l4 4v10.900h-12.300z" fill="url(#gf)" stroke="#8497c8" stroke-linejoin="round"/><path d="M10 .8v4h4" fill="#fff" stroke="#8b9fcf" stroke-width=".9" stroke-linejoin="round"/><rect x="2.800" y="11" width="10.500" height="4" fill="#fff"/><rect x="3" y="11.700" width="10.100" height="2.500" fill="#67aa3c"/></svg>
<div style="left:9px;top:407px;width:806px;height:19px;background:#f7f7f7;"></div>
<span class="t" style="left:94.20px;top:406.50px;"><span style="letter-spacing:1.16px">timer</span></span>
<span class="t" style="left:312.30px;top:406.50px;"><span style="letter-spacing:-0.02px">CHAR</span><span style="letter-spacing:0.75px">(</span><span style="letter-spacing:1.03px">50</span><span style="letter-spacing:0.75px">)</span></span>
<div style="left:409px;top:407px;width:406px;height:19px;overflow:hidden;">
<span class="t" style="left:3.00px;top:-0.50px;"><span style="letter-spacing:1.38px">&quot;</span><span style="letter-spacing:1.16px">timer</span><span style="letter-spacing:1.38px">&quot;</span><span style="letter-spacing:0.52px"> </span><span style="letter-spacing:-0.02px">CHAR</span><span style="letter-spacing:0.75px">(</span><span style="letter-spacing:1.03px">50</span><span style="letter-spacing:0.75px">)</span></span>
</div>
<svg style="left:72px;top:408px" width="16" height="16" viewBox="0 0 16 16"><path d="M1.900 .6h8.300l4 4v10.900h-12.300z" fill="url(#gf)" stroke="#8497c8" stroke-linejoin="round"/><path d="M10 .8v4h4" fill="#fff" stroke="#8b9fcf" stroke-width=".9" stroke-linejoin="round"/><rect x="2.800" y="11" width="10.500" height="4" fill="#fff"/><rect x="3" y="11.700" width="10.100" height="2.500" fill="#67aa3c"/></svg>
<span class="t" style="left:74.20px;top:425.50px;"><span style="letter-spacing:0.63px">tbl_ko</span></span>
<div style="left:409px;top:426px;width:406px;height:19px;overflow:hidden;">
<span class="t" style="left:3.00px;top:-0.50px;"><span style="letter-spacing:-0.23px">CREATE</span><span style="letter-spacing:0.52px"> </span>TABLE<span style="letter-spacing:0.52px"> </span><span style="letter-spacing:0.63px">tbl_ko</span><span style="letter-spacing:0.52px"> </span><span style="letter-spacing:0.75px">(</span><span style="letter-spacing:0.46px">ko_id</span><span style="letter-spacing:0.52px">,</span><span style="letter-spacing:0.52px"> </span><span style="letter-spacing:0.71px">ko_title</span><span style="letter-spacing:0.75px">)</span></span>
</div>
<svg style="left:37px;top:431px" width="5" height="8"><path d="M0 0.200v7.600l4.300-3.800z" fill="#4a4a4a"/></svg>
<svg style="left:52px;top:427px" width="16" height="16" viewBox="0 0 16 16"><rect x="1.500" y="1.500" width="13" height="13" fill="#f5f9fe" stroke="#8298c6"/><path d="M1.500 14.500h13" stroke="#7389bb" opacity=".6"/><path d="M3 3.500h10.200" stroke="#8fa69b" stroke-width="1"/><rect x="3" y="5" width="10.500" height="8" fill="#b4c8f0"/><rect x="4" y="6" width="1.300" height="1.200" fill="#ffffff"/><rect x="6.400" y="6" width="2.800" height="1.200" fill="#ffffff"/><rect x="10.400" y="6" width="3.100" height="1.200" fill="#ffffff"/><rect x="4" y="8.4" width="1.300" height="1.200" fill="#ffffff"/><rect x="6.400" y="8.4" width="2.800" height="1.200" fill="#ffffff"/><rect x="10.400" y="8.4" width="3.100" height="1.200" fill="#ffffff"/><rect x="4" y="10.8" width="1.300" height="1.200" fill="#ffffff"/><rect x="6.400" y="10.8" width="2.800" height="1.200" fill="#ffffff"/><rect x="10.400" y="10.8" width="3.100" height="1.200" fill="#ffffff"/></svg>
<div style="left:9px;top:445px;width:806px;height:19px;background:#f7f7f7;"></div>
<span class="t" style="left:74.20px;top:444.50px;"><span style="letter-spacing:0.91px">tbl_match</span></span>
<div style="left:409px;top:445px;width:406px;height:19px;overflow:hidden;">
<span class="t" style="left:3.00px;top:-0.50px;"><span style="letter-spacing:-0.23px">CREATE</span><span style="letter-spacing:0.52px"> </span>TABLE<span style="letter-spacing:0.52px"> </span><span style="letter-spacing:0.91px">tbl_match</span><span style="letter-spacing:0.52px"> </span><span style="letter-spacing:0.75px">(</span><span style="letter-spacing:0.42px">ID</span><span style="letter-spacing:0.52px"> </span><span style="letter-spacing:-0.11px">INTEGER</span><span style="letter-spacing:0.52px">,</span><span style="letter-spacing:0.52px"> </span><span style="letter-spacing:0.79px">zh_match</span><span style="letter-spacing:0.52px"> </span><span style="letter-spacing:-0.02px">CHAR</span><span style="letter-spacing:0.52px"> </span><span style="letter-spacing:0.75px">(</span><span style="letter-spacing:1.03px">50</span><span style="letter-spacing:0.75px">))</span></span>
</div>
<svg style="left:37px;top:450px" width="5" height="8"><path d="M0 0.200v7.600l4.300-3.800z" fill="#4a4a4a"/></svg>
<svg style="left:52px;top:446px" width="16" height="16" viewBox="0 0 16 16"><rect x="1.500" y="1.500" width="13" height="13" fill="#f5f9fe" stroke="#8298c6"/><path d="M1.500 14.500h13" stroke="#7389bb" opacity=".6"/><path d="M3 3.500h10.200" stroke="#8fa69b" stroke-width="1"/><rect x="3" y="5" width="10.500" height="8" fill="#b4c8f0"/><rect x="4" y="6" width="1.300" height="1.200" fill="#ffffff"/><rect x="6.400" y="6" width="2.800" height="1.200" fill="#ffffff"/><rect x="10.400" y="6" width="3.100" height="1.200" fill="#ffffff"/><rect x="4" y="8.4" width="1.300" height="1.200" fill="#ffffff"/><rect x="6.400" y="8.4" width="2.800" height="1.200" fill="#ffffff"/><rect x="10.400" y="8.4" width="3.100" height="1.200" fill="#ffffff"/><rect x="4" y="10.8" width="1.300" height="1.200" fill="#ffffff"/><rect x="6.400" y="10.8" width="2.800" height="1.200" fill="#ffffff"/><rect x="10.400" y="10.8" width="3.100" height="1.200" fill="#ffffff"/></svg>
<span class="t" style="left:74.20px;top:463.50px;"><span style="letter-spacing:0.84px">tbl_path</span></span>
<div style="left:409px;top:464px;width:406px;height:19px;overflow:hidden;">
<span class="t" style="left:3.00px;top:-0.50px;"><span style="letter-spacing:-0.23px">CREATE</span><span style="letter-spacing:0.52px"> </span>TABLE<span style="letter-spacing:0.52px"> </span><span style="letter-spacing:1.38px">&quot;</span><span style="letter-spacing:0.84px">tbl_path</span><span style="letter-spacing:1.38px">&quot;</span><span style="letter-spacing:0.52px"> </span><span style="letter-spacing:1.06px">(&quot;</span><span style="letter-spacing:0.75px">path_id</span><span style="letter-spacing:1.38px">&quot;</span><span style="letter-spacing:0.52px"> </span><span style="letter-spacing:-0.11px">TEXT</span><span style="letter-spacing:0.95px">,&quot;</span><span style="letter-spacing:1.06px">path</span><span style="letter-spacing:1.38px">&quot;</span><span style="letter-spacing:0.52px"> </span><span style="letter-spacing:-0.11px">TEXT</span><span style="letter-spacing:0.75px">)</span></span>
</div>
<svg style="left:37px;top:469px" width="5" height="8"><path d="M0 0.200v7.600l4.300-3.800z" fill="#4a4a4a"/></svg>
<svg style="left:52px;top:465px" width="16" height="16" viewBox="0 0 16 16"><rect x="1.500" y="1.500" width="13" height="13" fill="#f5f9fe" stroke="#8298c6"/><path d="M1.500 14.500h13" stroke="#7389bb" opacity=".6"/><path d="M3 3.500h10.200" stroke="#8fa69b" stroke-width="1"/><rect x="3" y="5" width="10.500" height="8" fill="#b4c8f0"/><rect x="4" y="6" width="1.300" height="1.200" fill="#ffffff"/><rect x="6.400" y="6" width="2.800" height="1.200" fill="#ffffff"/><rect x="10.400" y="6" width="3.100" height="1.200" fill="#ffffff"/><rect x="4" y="8.4" width="1.300" height="1.200" fill="#ffffff"/><rect x="6.400" y="8.4" width="2.800" height="1.200" fill="#ffffff"/><rect x="10.400" y="8.4" width="3.100" height="1.200" fill="#ffffff"/><rect x="4" y="10.8" width="1.300" height="1.200" fill="#ffffff"/><rect x="6.400" y="10.8" width="2.800" height="1.200" fill="#ffffff"/><rect x="10.400" y="10.8" width="3.100" height="1.200" fill="#ffffff"/></svg>
<div style="left:9px;top:483px;width:806px;height:19px;background:#f7f7f7;"></div>
<span class="t" style="left:74.20px;top:482.50px;"><span style="letter-spacing:0.85px">tbl_total</span></span>
<div style="left:409px;top:483px;width:406px;height:19px;overflow:hidden;">
<span class="t" style="left:3.00px;top:-0.50px;"><span style="letter-spacing:-0.23px">CREATE</span><span style="letter-spacing:0.52px"> </span>TABLE<span style="letter-spacing:0.52px"> </span><span style="letter-spacing:0.85px">tbl_total</span><span style="letter-spacing:0.75px">(</span><span style="letter-spacing:0.52px"> </span><span style="letter-spacing:0.42px">ID</span><span style="letter-spacing:0.52px"> </span><span style="letter-spacing:-0.11px">INTEGER</span><span style="letter-spacing:0.52px"> </span><span style="letter-spacing:-0.29px">PRIMARY</span><span style="letter-spacing:0.52px"> </span><span style="letter-spacing:-0.44px">KEY</span><span style="letter-spacing:0.52px">,</span><span style="letter-spacing:0.52px"> </span><span style="letter-spacing:1.03px">total</span><span style="letter-spacing:0.52px"> </span><span style="letter-spacing:-0.11px">INTEGER</span></span>
</div>
<svg style="left:37px;top:488px" width="5" height="8"><path d="M0 0.200v7.600l4.300-3.800z" fill="#4a4a4a"/></svg>
<svg style="left:52px;top:484px" width="16" height="16" viewBox="0 0 16 16"><rect x="1.500" y="1.500" width="13" height="13" fill="#f5f9fe" stroke="#8298c6"/><path d="M1.500 14.500h13" stroke="#7389bb" opacity=".6"/><path d="M3 3.500h10.200" stroke="#8fa69b" stroke-width="1"/><rect x="3" y="5" width="10.500" height="8" fill="#b4c8f0"/><rect x="4" y="6" width="1.300" height="1.200" fill="#ffffff"/><rect x="6.400" y="6" width="2.800" height="1.200" fill="#ffffff"/><rect x="10.400" y="6" width="3.100" height="1.200" fill="#ffffff"/><rect x="4" y="8.4" width="1.300" height="1.200" fill="#ffffff"/><rect x="6.400" y="8.4" width="2.800" height="1.200" fill="#ffffff"/><rect x="10.400" y="8.4" width="3.100" height="1.200" fill="#ffffff"/><rect x="4" y="10.8" width="1.300" height="1.200" fill="#ffffff"/><rect x="6.400" y="10.8" width="2.800" height="1.200" fill="#ffffff"/><rect x="10.400" y="10.8" width="3.100" height="1.200" fill="#ffffff"/></svg>
<span class="t" style="left:74.20px;top:501.50px;"><span style="letter-spacing:0.87px">tbl_tw</span></span>
<div style="left:409px;top:502px;width:406px;height:19px;overflow:hidden;">
<span class="t" style="left:3.00px;top:-0.50px;"><span style="letter-spacing:-0.23px">CREATE</span><span style="letter-spacing:0.52px"> </span>TABLE<span style="letter-spacing:0.52px"> </span><span style="letter-spacing:0.87px">tbl_tw</span><span style="letter-spacing:0.52px"> </span><span style="letter-spacing:0.75px">(</span><span style="letter-spacing:0.74px">tw_id</span><span style="letter-spacing:0.52px"> </span><span style="letter-spacing:-0.11px">INTEGER</span><span style="letter-spacing:0.52px">,</span><span style="letter-spacing:0.52px"> </span><span style="letter-spacing:0.89px">tw_title</span><span style="letter-spacing:0.52px"> </span><span style="letter-spacing:-0.02px">CHAR</span><span style="letter-spacing:0.52px"> </span><span style="letter-spacing:0.75px">(</span><span style="letter-spacing:1.03px">50</span><span style="letter-spacing:0.75px">))</span></span>
</div>
<svg style="left:37px;top:507px" width="5" height="8"><path d="M0 0.200v7.600l4.300-3.800z" fill="#4a4a4a"/></svg>
<svg style="left:52px;top:503px" width="16" height="16" viewBox="0 0 16 16"><rect x="1.500" y="1.500" width="13" height="13" fill="#f5f9fe" stroke="#8298c6"/><path d="M1.500 14.500h13" stroke="#7389bb" opacity=".6"/><path d="M3 3.500h10.200" stroke="#8fa69b" stroke-width="1"/><rect x="3" y="5" width="10.500" height="8" fill="#b4c8f0"/><rect x="4" y="6" width="1.300" height="1.200" fill="#ffffff"/><rect x="6.400" y="6" width="2.800" height="1.200" fill="#ffffff"/><rect x="10.400" y="6" width="3.100" height="1.200" fill="#ffffff"/><rect x="4" y="8.4" width="1.300" height="1.200" fill="#ffffff"/><rect x="6.400" y="8.4" width="2.800" height="1.200" fill="#ffffff"/><rect x="10.400" y="8.4" width="3.100" height="1.200" fill="#ffffff"/><rect x="4" y="10.8" width="1.300" height="1.200" fill="#ffffff"/><rect x="6.400" y="10.8" width="2.800" height="1.200" fill="#ffffff"/><rect x="10.400" y="10.8" width="3.100" height="1.200" fill="#ffffff"/></svg>
<div style="left:9px;top:521px;width:806px;height:19px;background:#f7f7f7;"></div>
<span class="t" style="left:74.20px;top:520.50px;"><span style="letter-spacing:0.77px">tbl_video</span></span>
<div style="left:409px;top:521px;width:406px;height:19px;overflow:hidden;">
<span class="t" style="left:3.00px;top:-0.50px;"><span style="letter-spacing:-0.23px">CREATE</span><span style="letter-spacing:0.52px"> </span>TABLE<span style="letter-spacing:0.52px"> </span><span style="letter-spacing:1.38px">&quot;</span><span style="letter-spacing:0.77px">tbl_video</span><span style="letter-spacing:1.38px">&quot;</span><span style="letter-spacing:0.52px"> </span><span style="letter-spacing:1.06px">(&quot;</span><span style="letter-spacing:0.68px">video_id</span><span style="letter-spacing:1.38px">&quot;</span><span style="letter-spacing:0.52px"> </span><span style="letter-spacing:-0.11px">TEXT</span><span style="letter-spacing:0.95px">,&quot;</span><span style="letter-spacing:0.88px">video</span><span style="letter-spacing:1.38px">&quot;</span><span style="letter-spacing:0.52px"> </span><span style="letter-spacing:-0.11px">TEXT</span><span style="letter-spacing:0.95px">,&quot;</span><span style="letter-spacing:1.06px">path</span><span style="letter-spacing:1.38px">&quot;</span></span>
</div>
<svg style="left:37px;top:526px" width="5" height="8"><path d="M0 0.200v7.600l4.300-3.800z" fill="#4a4a4a"/></svg>
<svg style="left:52px;top:522px" width="16" height="16" viewBox="0 0 16 16"><rect x="1.500" y="1.500" width="13" height="13" fill="#f5f9fe" stroke="#8298c6"/><path d="M1.500 14.500h13" stroke="#7389bb" opacity=".6"/><path d="M3 3.500h10.200" stroke="#8fa69b" stroke-width="1"/><rect x="3" y="5" width="10.500" height="8" fill="#b4c8f0"/><rect x="4" y="6" width="1.300" height="1.200" fill="#ffffff"/><rect x="6.400" y="6" width="2.800" height="1.200" fill="#ffffff"/><rect x="10.400" y="6" width="3.100" height="1.200" fill="#ffffff"/><rect x="4" y="8.4" width="1.300" height="1.200" fill="#ffffff"/><rect x="6.400" y="8.4" width="2.800" height="1.200" fill="#ffffff"/><rect x="10.400" y="8.4" width="3.100" height="1.200" fill="#ffffff"/><rect x="4" y="10.8" width="1.300" height="1.200" fill="#ffffff"/><rect x="6.400" y="10.8" width="2.800" height="1.200" fill="#ffffff"/><rect x="10.400" y="10.8" width="3.100" height="1.200" fill="#ffffff"/></svg>
<span class="t" style="left:74.20px;top:539.50px;"><span style="letter-spacing:0.64px">tbl_zh</span></span>
<div style="left:409px;top:540px;width:406px;height:19px;overflow:hidden;">
<span class="t" style="left:3.00px;top:-0.50px;"><span style="letter-spacing:-0.23px">CREATE</span><span style="letter-spacing:0.52px"> </span>TABLE<span style="letter-spacing:0.52px"> </span><span style="letter-spacing:0.64px">tbl_zh</span><span style="letter-spacing:0.52px"> </span><span style="letter-spacing:0.75px">(</span><span style="letter-spacing:0.47px">zh_id</span><span style="letter-spacing:0.52px"> </span><span style="letter-spacing:-0.11px">INTEGER</span><span style="letter-spacing:0.52px">,</span><span style="letter-spacing:0.52px"> </span><span style="letter-spacing:0.72px">zh_title</span><span style="letter-spacing:0.52px"> </span><span style="letter-spacing:-0.02px">CHAR</span><span style="letter-spacing:0.52px"> </span><span style="letter-spacing:0.75px">(</span><span style="letter-spacing:1.03px">50</span><span style="letter-spacing:0.75px">))</span></span>
</div>
<svg style="left:37px;top:545px" width="5" height="8"><path d="M0 0.200v7.600l4.300-3.800z" fill="#4a4a4a"/></svg>
<svg style="left:52px;top:541px" width="16" height="16" viewBox="0 0 16 16"><rect x="1.500" y="1.500" width="13" height="13" fill="#f5f9fe" stroke="#8298c6"/><path d="M1.500 14.500h13" stroke="#7389bb" opacity=".6"/><path d="M3 3.500h10.200" stroke="#8fa69b" stroke-width="1"/><rect x="3" y="5" width="10.500" height="8" fill="#b4c8f0"/><rect x="4" y="6" width="1.300" height="1.200" fill="#ffffff"/><rect x="6.400" y="6" width="2.800" height="1.200" fill="#ffffff"/><rect x="10.400" y="6" width="3.100" height="1.200" fill="#ffffff"/><rect x="4" y="8.4" width="1.300" height="1.200" fill="#ffffff"/><rect x="6.400" y="8.4" width="2.800" height="1.200" fill="#ffffff"/><rect x="10.400" y="8.4" width="3.100" height="1.200" fill="#ffffff"/><rect x="4" y="10.8" width="1.300" height="1.200" fill="#ffffff"/><rect x="6.400" y="10.8" width="2.800" height="1.200" fill="#ffffff"/><rect x="10.400" y="10.8" width="3.100" height="1.200" fill="#ffffff"/></svg>
<div style="left:9px;top:559px;width:806px;height:19px;background:#f7f7f7;"></div>
<span class="t" style="left:54.20px;top:558.50px;"><span style="letter-spacing:0.22px">I</span><span style="letter-spacing:0.73px">ndices</span><span style="letter-spacing:0.52px"> </span><span style="letter-spacing:0.75px">(</span><span style="letter-spacing:1.03px">0</span><span style="letter-spacing:0.75px">)</span></span>
<svg style="left:32px;top:560px" width="16" height="16" viewBox="0 0 16 16"><path d="M.600 .600h5.600l8.900 8.100-6.100 6.100L.600 6.300z" fill="#f4f7fb" stroke="#bfc8d4" stroke-width=".900" stroke-linejoin="round"/><path d="M4.300 6l2.700-2.500 6 5.400-3 3z" fill="#84b7ec"/><path d="M5.300 6l1.700-1.500 2.600 2.300-1.800 1.700z" fill="#a9cff5" opacity=".8"/><circle cx="2.900" cy="2.900" r="1" fill="#fdfdfd" stroke="#b7c0cc" stroke-width=".700"/></svg>
<span class="t" style="left:54.20px;top:577.50px;"><span style="letter-spacing:0.22px">V</span><span style="letter-spacing:0.68px">iews</span><span style="letter-spacing:0.52px"> </span><span style="letter-spacing:0.75px">(</span><span style="letter-spacing:1.03px">0</span><span style="letter-spacing:0.75px">)</span></span>
<svg style="left:32px;top:579px" width="16" height="16" viewBox="0 0 16 16"><rect x="1.5" y="1.5" width="13" height="13" fill="#f7f9fc" stroke="#8ea0cf"/><rect x="3.3" y="3.3" width="9.4" height="7.6" fill="#6aa84a"/><path d="M3.3 3.3h2.2l1.2 4-1.4 3.6h-2z" fill="#4d7ab0"/><path d="M12.7 3.3h-2.2l-1.2 4 1.4 3.6h2z" fill="#4d7ab0"/><path d="M3.3 9.4h9.4v1.5H3.3z" fill="#8cc067"/><path d="M5.6 3.3h4.8v1.6H5.6z" fill="#9ed07c"/><rect x="3.3" y="10.9" width="9.4" height="1.8" fill="#e4f0d8"/></svg>
<div style="left:9px;top:597px;width:806px;height:19px;background:#f7f7f7;"></div>
<span class="t" style="left:54.20px;top:596.50px;">T<span style="letter-spacing:0.56px">riggers</span><span style="letter-spacing:0.52px"> </span><span style="letter-spacing:0.75px">(</span><span style="letter-spacing:1.03px">0</span><span style="letter-spacing:0.75px">)</span></span>
<svg style="left:32px;top:598px" width="16" height="16" viewBox="0 0 16 16"><path d="M4.300 .900h8.700c1.700 0 2.600 1 2.400 2.300-.200 1.100-1.300 1.500-2.400.900L11.900 13H3.100z" fill="#c9dcf6" stroke="#8097cd" stroke-width=".900" stroke-linejoin="round"/><path d="M5.200 1.800l-1 9.600h6.600l1.100-9.600z" fill="#dbe8fa" opacity=".85"/><path d="M.600 13.400c0-1.100.700-1.700 1.700-1.700h9.700c-.800.700-.800 2.800 0 3.500H2.300c-1 0-1.700-.700-1.700-1.800z" fill="#e6effc" stroke="#8097cd" stroke-width=".900" stroke-linejoin="round"/></svg>
<div style="left:9px;top:921px;width:806px;height:14px;background:#e4e4e4;border-top:1px solid #b6b6b6;"></div>
<div style="left:9px;top:922px;width:14px;height:13px;background:linear-gradient(#fdfdfd,#f1f1f1);border-right:1px solid #b6b6b6;"></div>
<div style="left:801px;top:922px;width:14px;height:13px;background:linear-gradient(#fdfdfd,#f1f1f1);border-left:1px solid #b6b6b6;"></div>
<div style="left:23px;top:922px;width:342px;height:13px;background:linear-gradient(#fefefe,#f0f0f0);border-right:1px solid #9e9e9e;"></div>
<svg style="left:13px;top:924px" width="5" height="9"><path d="M4.400 0v8.600L0 4.300z" fill="#3a3a3a"/></svg>
<svg style="left:805px;top:924px" width="5" height="9"><path d="M0.600 0v8.600L5 4.300z" fill="#3a3a3a"/></svg>
<span class="t" style="left:834.00px;top:60.50px;"><span style="letter-spacing:-0.45px">E</span><span style="letter-spacing:1.07px">dit</span><span style="letter-spacing:0.52px"> </span><span style="letter-spacing:0.62px">D</span><span style="letter-spacing:0.82px">atabase</span><span style="letter-spacing:0.52px"> </span><span style="letter-spacing:-0.31px">C</span><span style="letter-spacing:0.73px">ell</span></span>
<span class="t" style="left:839.00px;top:98.50px;"><span style="letter-spacing:0.39px">M</span><span style="letter-spacing:0.83px">ode</span><span style="letter-spacing:0.77px">:</span></span>
<div style="left:885px;top:96px;width:86px;height:25px;background:linear-gradient(#fefefe,#f1f1f1);border:1px solid #b2b2b2;border-radius:3px;"></div>
<span class="t" style="left:890.50px;top:98.50px;">T<span style="letter-spacing:0.33px">ext</span></span>
<svg style="left:955px;top:106px" width="9" height="5"><path d="M0.500 0.300h7.600l-3.800 3.800z" fill="#4a4a4a"/></svg>
<div style="left:977px;top:97px;width:24px;height:23px;background:#dddddd;border:1px solid #b9b9b9;border-radius:2px;"></div>
<div style="left:1080px;top:93px;width:32px;height:31px;background:#dddddd;border:1px solid #b8b8b8;border-radius:3px;"></div>
<svg style="left:981px;top:100px" width="16" height="16" viewBox="0 0 16 16"><g fill="#e6e6e6" stroke="#bdbdbd" stroke-width=".7" stroke-dasharray="1.2 .8"><path d="M6.300 .8h2l.4 1.700 1.300.5 1.500-.9 1.400 1.400-.9 1.500.5 1.300 1.700.4v2l-1.700.4-.5 1.300.9 1.500-1.400 1.400-1.500-.9-1.300.5-.4 1.700h-2l-.4-1.700-1.300-.5-1.500.9-1.400-1.400.9-1.500-.5-1.300L.5 8.700v-2l1.700-.4.5-1.300-.9-1.500 1.400-1.400 1.500.9 1.300-.5z"/></g><circle cx="7.300" cy="7.700" r="2.100" fill="#efefef" stroke="#c4c4c4" stroke-width=".7"/><path transform="translate(-1 0)" d="M6.3 9.2h4.4V6.4l5 4.5-5 4.5v-2.8H6.3z" fill="#6dbb4b" stroke="#3d8a2b" stroke-width=".9" stroke-linejoin="round"/><path transform="translate(-1 0)" d="M7 10h4.4V8.2l3 2.7z" fill="#a4dd86" opacity=".7"/></svg>
<svg style="left:1088px;top:100px" width="16" height="16" viewBox="0 0 16 16"><path d="M1.700 .5h8.800l3.800 3.800v11.200h-12.600z" fill="#fff" stroke="#b0b0b0" stroke-linejoin="round"/><path d="M10.300 .8v3.700h3.700" fill="#f2f2f2" stroke="#b0b0b0" stroke-width=".9" stroke-linejoin="round"/><path d="M4 4.500h5" stroke="#9a9a9a" stroke-width=".9"/><path d="M4 6.500h8M4 8.500h8" stroke="#8e8e8e" stroke-width=".9"/><path d="M4 10.500h8M4 12.500h8" stroke="#b5b5b5" stroke-width=".9"/></svg>
<svg style="left:1121px;top:100px" width="16" height="16" viewBox="0 0 16 16"><path d="M2 3.400h12M2 11.400h12M2 13.500h9" stroke="#111" stroke-width="1.100"/><path d="M6 6h8M6 9h8" stroke="#111" stroke-width="1.900"/><path d="M1.200 5.200l3.600 2.300-3.600 2.300 1-2.300z" fill="#8a9cb6"/></svg>
<svg style="left:1154px;top:100px" width="16" height="16" viewBox="0 0 16 16"><path d="M.8 3.400h4.400l1 1.300H8v9.800H.8z" fill="#5278b4" stroke="#3b5b92" stroke-width=".9"/><path d="M4.500 .6h6.800l3 3v8.800h-9.800z" fill="#f3f3f3" stroke="#6b6b6b" stroke-width=".9" stroke-linejoin="round"/><path d="M6 3.500h4M6 5.300h6" stroke="#9a9a9a" stroke-width=".9"/><path d="M1.200 7.300h14.300l-.8 7.500H.8z" fill="#6e9fdc" stroke="#3b5b92" stroke-width=".9" stroke-linejoin="round"/><path d="M2 8.200h12.500l-.3 2.800H1.800z" fill="#9cc0ec" opacity=".7"/></svg>
<svg style="left:1170px;top:117px" width="6" height="3"><path d="M0 0h6l-3 3z" fill="#444"/></svg>
<svg style="left:1187px;top:100px" width="16" height="16" viewBox="0 0 16 16"><path d="M.600 .600h6.800l3.100 3.100v10.300H.600z" fill="#c4d9f5" stroke="#6f8fc8" stroke-linejoin="round"/><path d="M1.500 1.500h5.500v3h2.600v8.600H1.500z" fill="#dbe8fa" opacity=".8"/><path d="M7.300 .800v3h3" fill="#eef4fc" stroke="#6f8fc8" stroke-width=".900"/><path d="M2.400 10.500h4.500" stroke="#8fb0e0"/><rect x="7" y="6.8" width="8.4" height="8.4" rx=".8" fill="#5d8fd4" stroke="#3c62a2"/><rect x="8.5" y="7.3" width="5.4" height="3.53" fill="#f4f7fb"/><rect x="8.5" y="11.84" width="5.4" height="2.52" fill="#dfe7f2"/><rect x="9.5" y="12.51" width="2.9000000000000004" height="1.3" fill="#8cc152"/><rect x="10.7" y="8.0" width="1" height="1.4" fill="#3c62a2"/></svg>
<svg style="left:1220px;top:100px" width="16" height="16" viewBox="0 0 16 16"><rect x=".8" y="1.500" width="14.400" height="12" fill="#fdfdfe" stroke="#7c98d4"/><rect x="1.300" y="2" width="13.400" height="2.600" fill="#86a5e2"/><path d="M1.300 5.100h13.400" stroke="#b9cbef" stroke-width=".8"/><g transform="translate(2.300 2.400) scale(.860)"><path transform="translate(0 0)" d="M6.3 9.2h4.4V6.4l5 4.5-5 4.5v-2.8H6.3z" fill="#6dbb4b" stroke="#3d8a2b" stroke-width=".9" stroke-linejoin="round"/><path transform="translate(0 0)" d="M7 10h4.4V8.2l3 2.7z" fill="#a4dd86" opacity=".7"/></g></svg>
<svg style="left:1253px;top:100px" width="16" height="16" viewBox="0 0 16 16"><rect x=".8" y="1.500" width="14.400" height="12" fill="#fdfdfe" stroke="#7c98d4"/><rect x="1.300" y="2" width="13.400" height="2.600" fill="#86a5e2"/><path d="M1.300 5.100h13.400" stroke="#b9cbef" stroke-width=".8"/><g transform="translate(3.6 9.8)"><rect x=".6" y=".6" width="6.2" height="4.6" rx="2.2" fill="#dcdcdc" stroke="#4f4f4f" stroke-width="1.2"/><rect x="5.6" y=".6" width="6.2" height="4.6" rx="2.2" fill="#dcdcdc" stroke="#4f4f4f" stroke-width="1.2"/><path d="M3.4 2.9h5.6" stroke="#2b2b2b" stroke-width="1.7"/></g></svg>
<svg style="left:1286px;top:100px" width="16" height="16" viewBox="0 0 16 16"><rect x=".8" y="4.500" width="14" height="6.500" fill="#fafafa" stroke="#e6e6e6" stroke-width=".9"/><path d="M3 6v3.600" stroke="#dcdcdc"/><circle cx="12.500" cy="12.300" r="3.400" fill="#c4c4c4" stroke="#a6a6a6" stroke-width=".9"/><path d="M10.600 12.300h3.800" stroke="#fff" stroke-width="1.400"/></svg>
<svg style="left:1319px;top:100px" width="16" height="16" viewBox="0 0 16 16"><path d="M4 7.500V.600h5.800l2.400 2.400v4.500" fill="#cfe2f8" stroke="#7a93c6" stroke-linejoin="round"/><path d="M4.900 1.500h4.400l2 2v3.500H4.900z" fill="#b4d0f2"/><path d="M2.400 6.500h11.200c1.100 0 1.900.900 1.900 2v3.400c0 .600-.400 1-1 1H1.500c-.600 0-1-.400-1-1V8.500c0-1.100.800-2 1.900-2z" fill="#e9e9e9" stroke="#566682" stroke-linejoin="round"/><path d="M1.200 10.300h13.600v2.100H1.200z" fill="#c4c4c4" opacity=".8"/><rect x="4.200" y="8.200" width="7.600" height="2.700" fill="#a4a4a4" stroke="#6f6f6f" stroke-width=".600"/><path d="M3.500 11.600h9v3.400c0 .300-.200.500-.500.500H4c-.300 0-.500-.200-.500-.500z" fill="#f5f9fe" stroke="#566682" stroke-width=".900"/><path d="M4.800 13.600h6.400" stroke="#b4cae8" stroke-width=".900"/></svg>
<div style="left:848px;top:143px;width:490px;height:140px;background:#fff;border:1px solid #b2b2b2;"></div>
<div style="left:849px;top:144px;width:28px;height:138px;background:#f0f0f0;"></div>
<span class="t" style="left:852.00px;top:142.50px;"><span style="letter-spacing:0.41px">1</span></span>
<span class="t" style="left:839.00px;top:296.50px;">T<span style="letter-spacing:0.31px">ype</span><span style="letter-spacing:0.52px"> </span><span style="letter-spacing:0.84px">of</span><span style="letter-spacing:0.52px"> </span><span style="letter-spacing:0.99px">data</span><span style="letter-spacing:0.52px"> </span><span style="letter-spacing:0.92px">currently</span><span style="letter-spacing:0.52px"> </span><span style="letter-spacing:0.86px">in</span><span style="letter-spacing:0.52px"> </span><span style="letter-spacing:0.71px">cell</span></span>
<span class="t" style="left:839.00px;top:319.50px;"><span style="letter-spacing:-0.42px">S</span><span style="letter-spacing:0.60px">ize</span><span style="letter-spacing:0.52px"> </span><span style="letter-spacing:0.84px">of</span><span style="letter-spacing:0.52px"> </span><span style="letter-spacing:0.99px">data</span><span style="letter-spacing:0.52px"> </span><span style="letter-spacing:0.92px">currently</span><span style="letter-spacing:0.52px"> </span><span style="letter-spacing:0.86px">in</span><span style="letter-spacing:0.52px"> </span><span style="letter-spacing:0.94px">table</span></span>
<div style="left:1267px;top:305px;width:80px;height:25px;background:linear-gradient(#fdfdfd,#f1f1f1);border:1px solid #c6c6c6;border-radius:3px;"></div>
<span class="t" style="left:1288.00px;top:307.50px;color:#bebebe;"><span style="letter-spacing:0.22px">A</span><span style="letter-spacing:0.98px">pply</span></span>
<div style="left:1088px;top:349px;width:1px;height:1px;background:#bdbdbd;"></div>
<div style="left:1091px;top:349px;width:1px;height:1px;background:#bdbdbd;"></div>
<div style="left:1094px;top:349px;width:1px;height:1px;background:#bdbdbd;"></div>
<div style="left:1097px;top:349px;width:1px;height:1px;background:#bdbdbd;"></div>
<div style="left:1100px;top:349px;width:1px;height:1px;background:#bdbdbd;"></div>
<div style="left:827px;top:496px;width:1px;height:1px;background:#c6c6c6;"></div>
<div style="left:827px;top:499px;width:1px;height:1px;background:#c6c6c6;"></div>
<div style="left:827px;top:502px;width:1px;height:1px;background:#c6c6c6;"></div>
<div style="left:827px;top:505px;width:1px;height:1px;background:#c6c6c6;"></div>
<div style="left:827px;top:508px;width:1px;height:1px;background:#c6c6c6;"></div>
<div style="left:827px;top:511px;width:1px;height:1px;background:#c6c6c6;"></div>
<span class="t" style="left:834.00px;top:352.50px;"><span style="letter-spacing:-0.09px">SQL</span><span style="letter-spacing:0.52px"> </span><span style="letter-spacing:0.02px">L</span><span style="letter-spacing:0.75px">og</span></span>
<span class="t" style="left:839.00px;top:386.50px;"><span style="letter-spacing:-0.42px">S</span><span style="letter-spacing:0.98px">how</span><span style="letter-spacing:0.52px"> </span><span style="letter-spacing:-0.09px">S<u>Q</u>L</span><span style="letter-spacing:0.52px"> </span><span style="letter-spacing:1.06px">submitted</span><span style="letter-spacing:0.52px"> </span><span style="letter-spacing:1.10px">by</span></span>
<div style="left:1001px;top:381px;width:103px;height:30px;background:linear-gradient(#fefefe,#f1f1f1);border:1px solid #b2b2b2;border-radius:3px;"></div>
<span class="t" style="left:1006.50px;top:386.50px;"><span style="letter-spacing:0.22px">A</span><span style="letter-spacing:0.88px">pplication</span></span>
<svg style="left:1088px;top:394px" width="9" height="5"><path d="M0.500 0.300h7.600l-3.800 3.800z" fill="#4a4a4a"/></svg>
<div style="left:1267px;top:381px;width:80px;height:30px;background:linear-gradient(#fefefe,#f1f1f1);border:1px solid #b2b2b2;border-radius:3px;"></div>
<span class="t" style="left:1290.00px;top:386.50px;"><span style="letter-spacing:-0.31px"><u>C</u></span><span style="letter-spacing:0.81px">lear</span></span>
<div style="left:839px;top:417px;width:508px;height:489px;background:#fff;border:1px solid #b2b2b2;"></div>
<div style="left:840px;top:418px;width:29px;height:487px;background:#f0f0f0;"></div>
<div style="left:869px;top:418px;width:14px;height:487px;background:conic-gradient(#fff 25%,#e9e9e9 0 50%,#fff 0 75%,#e9e9e9 0) 0 0/2px 2px;"></div>
<span class="t" style="left:842.50px;top:416.50px;"><span style="letter-spacing:0.41px">1</span></span>
<span class="t" style="left:842.50px;top:434.50px;"><span style="letter-spacing:0.41px">2</span></span>
<span class="t" style="left:842.50px;top:452.50px;"><span style="letter-spacing:0.41px">3</span></span>
<span class="t" style="left:842.50px;top:470.50px;"><span style="letter-spacing:0.41px">4</span></span>
<span class="t" style="left:842.50px;top:488.50px;"><span style="letter-spacing:0.41px">5</span></span>
<span class="t" style="left:884.00px;top:417.80px;color:#00007f;font-size:12px;font-family:'Liberation Mono',monospace;font-weight:bold;"><span style="letter-spacing:0.02px">PRAGMA</span></span>
<span class="t" style="left:927.20px;top:417.80px;font-size:12px;font-family:'Liberation Mono',monospace;"><span style="letter-spacing:0.02px"> </span></span>
<span class="t" style="left:934.40px;top:417.80px;color:#7f007f;font-size:12px;font-family:'Liberation Mono',monospace;"><span style="letter-spacing:0.02px">foreign_keys</span></span>
<span class="t" style="left:1020.80px;top:417.80px;font-size:12px;font-family:'Liberation Mono',monospace;"><span style="letter-spacing:0.02px"> </span><span style="letter-spacing:0.02px">=</span><span style="letter-spacing:0.02px"> </span></span>
<span class="t" style="left:1042.40px;top:417.80px;color:#c00000;font-size:12px;font-family:'Liberation Mono',monospace;"><span style="letter-spacing:0.02px">&#x27;</span><span style="letter-spacing:0.02px">1</span><span style="letter-spacing:0.02px">&#x27;</span></span>
<span class="t" style="left:1064.00px;top:417.80px;font-size:12px;font-family:'Liberation Mono',monospace;"><span style="letter-spacing:0.02px">;</span></span>
<span class="t" style="left:884.00px;top:435.80px;color:#00007f;font-size:12px;font-family:'Liberation Mono',monospace;font-weight:bold;"><span style="letter-spacing:0.02px">PRAGMA</span></span>
<span class="t" style="left:927.20px;top:435.80px;font-size:12px;font-family:'Liberation Mono',monospace;"><span style="letter-spacing:0.02px"> </span></span>
<span class="t" style="left:934.40px;top:435.80px;color:#7f007f;font-size:12px;font-family:'Liberation Mono',monospace;"><span style="letter-spacing:0.02px">database_list</span></span>
<span class="t" style="left:1028.00px;top:435.80px;font-size:12px;font-family:'Liberation Mono',monospace;"><span style="letter-spacing:0.02px">;</span></span>
<span class="t" style="left:884.00px;top:453.80px;color:#00007f;font-size:12px;font-family:'Liberation Mono',monospace;font-weight:bold;"><span style="letter-spacing:0.02px">SELECT</span></span>
<span class="t" style="left:927.20px;top:453.80px;font-size:12px;font-family:'Liberation Mono',monospace;"><span style="letter-spacing:0.02px"> </span></span>
<span class="t" style="left:934.40px;top:453.80px;color:#7f007f;font-size:12px;font-family:'Liberation Mono',monospace;"><span style="letter-spacing:0.02px">type</span></span>
<span class="t" style="left:963.20px;top:453.80px;font-size:12px;font-family:'Liberation Mono',monospace;"><span style="letter-spacing:0.02px">,</span></span>
<span class="t" style="left:970.40px;top:453.80px;color:#7f007f;font-size:12px;font-family:'Liberation Mono',monospace;"><span style="letter-spacing:0.02px">name</span></span>
<span class="t" style="left:999.20px;top:453.80px;font-size:12px;font-family:'Liberation Mono',monospace;"><span style="letter-spacing:0.02px">,</span></span>
<span class="t" style="left:1006.40px;top:453.80px;color:#7f007f;font-size:12px;font-family:'Liberation Mono',monospace;"><span style="letter-spacing:0.02px">sql</span></span>
<span class="t" style="left:1028.00px;top:453.80px;font-size:12px;font-family:'Liberation Mono',monospace;"><span style="letter-spacing:0.02px">,</span></span>
<span class="t" style="left:1035.20px;top:453.80px;color:#7f007f;font-size:12px;font-family:'Liberation Mono',monospace;"><span style="letter-spacing:0.02px">tbl_name</span></span>
<span class="t" style="left:1092.80px;top:453.80px;font-size:12px;font-family:'Liberation Mono',monospace;"><span style="letter-spacing:0.02px"> </span></span>
<span class="t" style="left:1100.00px;top:453.80px;color:#00007f;font-size:12px;font-family:'Liberation Mono',monospace;font-weight:bold;"><span style="letter-spacing:0.02px">FROM</span></span>
<span class="t" style="left:1128.80px;top:453.80px;font-size:12px;font-family:'Liberation Mono',monospace;"><span style="letter-spacing:0.02px"> </span></span>
<span class="t" style="left:1136.00px;top:453.80px;color:#7f007f;font-size:12px;font-family:'Liberation Mono',monospace;"><span style="letter-spacing:0.02px">&quot;</span><span style="letter-spacing:0.02px">main</span><span style="letter-spacing:0.02px">&quot;</span></span>
<span class="t" style="left:1179.20px;top:453.80px;font-size:12px;font-family:'Liberation Mono',monospace;"><span style="letter-spacing:0.02px">.</span></span>
<span class="t" style="left:1186.40px;top:453.80px;color:#7f007f;font-size:12px;font-family:'Liberation Mono',monospace;"><span style="letter-spacing:0.02px">sqlite_master</span></span>
<span class="t" style="left:1280.00px;top:453.80px;font-size:12px;font-family:'Liberation Mono',monospace;"><span style="letter-spacing:0.02px">;</span></span>
<span class="t" style="left:884.00px;top:471.80px;color:#00007f;font-size:12px;font-family:'Liberation Mono',monospace;font-weight:bold;"><span style="letter-spacing:0.02px">PRAGMA</span></span>
<span class="t" style="left:927.20px;top:471.80px;font-size:12px;font-family:'Liberation Mono',monospace;"><span style="letter-spacing:0.02px"> </span></span>
<span class="t" style="left:934.40px;top:471.80px;color:#7f007f;font-size:12px;font-family:'Liberation Mono',monospace;"><span style="letter-spacing:0.02px">encoding</span></span>
<span class="t" style="left:992.00px;top:471.80px;font-size:12px;font-family:'Liberation Mono',monospace;"><span style="letter-spacing:0.02px">;</span></span>
<svg style="left:1329px;top:65px" width="26" height="11" fill="none" stroke="#5e5e5e" stroke-width="1"><rect x="0.500" y="0.500" width="10" height="10" rx="1.800" fill="#f7f7f7"/><path d="M4.500 4.500v-2h4v4h-2" /><rect x="2.500" y="4.500" width="4" height="4" rx=".600"/><rect x="14.500" y="0.500" width="10" height="10" rx="1.800" fill="#f7f7f7"/><path d="M16.800 2.800l5.400 5.400M22.200 2.800l-5.400 5.400" stroke-width="1.900" stroke="#555"/></svg>
<svg style="left:1329px;top:357px" width="26" height="11" fill="none" stroke="#5e5e5e" stroke-width="1"><rect x="0.500" y="0.500" width="10" height="10" rx="1.800" fill="#f7f7f7"/><path d="M4.500 4.500v-2h4v4h-2" /><rect x="2.500" y="4.500" width="4" height="4" rx=".600"/><rect x="14.500" y="0.500" width="10" height="10" rx="1.800" fill="#f7f7f7"/><path d="M16.800 2.800l5.400 5.400M22.200 2.800l-5.400 5.400" stroke-width="1.900" stroke="#555"/></svg>
<div style="left:831px;top:916px;width:525px;height:1px;background:#c2c2c2;"></div>
<div style="left:908px;top:916px;width:50px;height:25px;background:linear-gradient(#dedede,#e2e2e2);border:1px solid #b2b2b2;border-top:1px solid #c2c2c2;border-radius:0 0 2px 2px;"></div>
<span class="t" style="left:920.00px;top:918.50px;"><span style="letter-spacing:-0.83px">P</span><span style="letter-spacing:0.97px">lot</span></span>
<div style="left:957px;top:916px;width:101px;height:25px;background:linear-gradient(#dedede,#e2e2e2);border:1px solid #b2b2b2;border-top:1px solid #c2c2c2;border-radius:0 0 2px 2px;"></div>
<span class="t" style="left:969.00px;top:918.50px;"><span style="letter-spacing:0.44px">DB</span><span style="letter-spacing:0.52px"> </span><span style="letter-spacing:-0.42px">S</span><span style="letter-spacing:0.99px">chema</span></span>
<div style="left:1057px;top:916px;width:75px;height:25px;background:linear-gradient(#dedede,#e2e2e2);border:1px solid #b2b2b2;border-top:1px solid #c2c2c2;border-radius:0 0 2px 2px;"></div>
<span class="t" style="left:1069.50px;top:918.50px;"><span style="letter-spacing:-0.36px">R</span><span style="letter-spacing:1.00px">emote</span></span>
<div style="left:830px;top:915px;width:79px;height:28px;background:linear-gradient(#efefef,#fbfbfb);border:1px solid #b2b2b2;border-top:none;border-radius:0 0 3px 3px;"></div>
<span class="t" style="left:842.50px;top:919.50px;"><span style="letter-spacing:-0.09px">SQL</span><span style="letter-spacing:0.52px"> </span><span style="letter-spacing:0.02px">L</span><span style="letter-spacing:0.75px">og</span></span>
<span class="t" style="left:1294.00px;top:945.50px;color:#b5b5b5;"><span style="letter-spacing:-0.11px">UTF</span><span style="letter-spacing:0.36px">-</span><span style="letter-spacing:1.03px">8</span></span>
<div style="left:1353px;top:954px;width:1px;height:1px;background:#b4b4b4;"></div>
<div style="left:1354px;top:955px;width:1px;height:1px;background:#fbfbfb;"></div>
<div style="left:1353px;top:957px;width:1px;height:1px;background:#b4b4b4;"></div>
<div style="left:1354px;top:958px;width:1px;height:1px;background:#fbfbfb;"></div>
<div style="left:1350px;top:957px;width:1px;height:1px;background:#b4b4b4;"></div>
<div style="left:1351px;top:958px;width:1px;height:1px;background:#fbfbfb;"></div>
<div style="left:1353px;top:960px;width:1px;height:1px;background:#b4b4b4;"></div>
<div style="left:1354px;top:961px;width:1px;height:1px;background:#fbfbfb;"></div>
<div style="left:1350px;top:960px;width:1px;height:1px;background:#b4b4b4;"></div>
<div style="left:1351px;top:961px;width:1px;height:1px;background:#fbfbfb;"></div>
<div style="left:1347px;top:960px;width:1px;height:1px;background:#b4b4b4;"></div>
<div style="left:1348px;top:961px;width:1px;height:1px;background:#fbfbfb;"></div>
<div style="left:1353px;top:963px;width:1px;height:1px;background:#b4b4b4;"></div>
<div style="left:1354px;top:964px;width:1px;height:1px;background:#fbfbfb;"></div>
<div style="left:1350px;top:963px;width:1px;height:1px;background:#b4b4b4;"></div>
<div style="left:1351px;top:964px;width:1px;height:1px;background:#fbfbfb;"></div>
<div style="left:1347px;top:963px;width:1px;height:1px;background:#b4b4b4;"></div>
<div style="left:1348px;top:964px;width:1px;height:1px;background:#fbfbfb;"></div>
<div style="left:1344px;top:963px;width:1px;height:1px;background:#b4b4b4;"></div>
<div style="left:1345px;top:964px;width:1px;height:1px;background:#fbfbfb;"></div>
</div></body></html>
